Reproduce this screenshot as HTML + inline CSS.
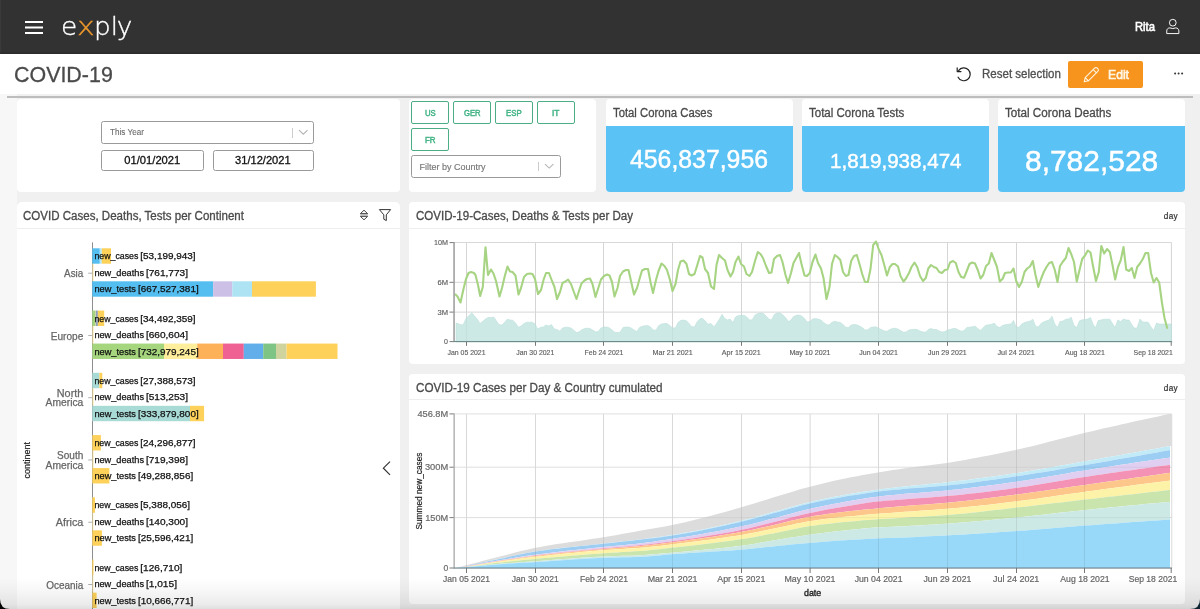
<!DOCTYPE html>
<html lang="en">
<head>
<meta charset="utf-8">
<title>exply – COVID-19</title>
<style>
*{box-sizing:border-box;margin:0;padding:0}
html,body{width:1200px;height:609px;overflow:hidden}
body{position:relative;background:#f0f0f0}
#app{position:absolute;left:0;top:0;width:1200px;height:609px;overflow:hidden;background:#f0f0f0;will-change:transform;font-family:"Liberation Sans",Arial,sans-serif;color:#333}
.t{position:absolute;white-space:pre;display:block}
.abs{position:absolute}
header{position:absolute;left:0;top:0;width:1200px;height:53.5px;background:#323232;box-shadow:inset 0 -1.5px 0 #2c2c2c,inset 1.2px 0 0 #3a3a3a}
.toolbar{position:absolute;left:0;top:53.5px;width:1200px;height:40.8px;background:#fff}
.lstrip{position:absolute;left:0;top:94.3px;width:16.5px;height:520px;background:#f7f7f7}
.rule{position:absolute;left:7px;top:96px;width:1186px;height:2px;background:#bdbdbd}
.card{position:absolute;background:#fff;border-radius:4px;overflow:hidden}
.card h2{font-weight:400}
.hdrline{position:absolute;left:0;right:0;height:1px;background:#eeeeee}
.sel{position:absolute;border:1px solid #9a9a9a;border-radius:2.5px;background:#fff}
.btn{position:absolute;border:1px solid #4dae85;border-radius:2px;background:#fff;width:38px;height:23px}
.kpi{position:absolute;left:0;right:0;bottom:0;background:#5bc2f5}
svg{position:absolute;left:0;top:0;overflow:visible}
svg text{font-family:"Liberation Sans",Arial,sans-serif}
.fade{position:absolute;left:0;top:578px;width:1200px;height:31px;background:linear-gradient(to bottom,rgba(0,0,0,0) 0%,rgba(0,0,0,0.03) 40%,rgba(0,0,0,0.08) 85%,rgba(0,0,0,0.125) 100%);pointer-events:none}
.corner{position:absolute;bottom:0;width:10px;height:10px;overflow:hidden}
</style>
</head>
<body>
<div id="app">
<header>
<svg class="abs" width="18" height="13" style="left:25px;top:21px" viewBox="0 0 18 13"><path d="M0 1h18M0 6.5h18M0 12h18" stroke="#fff" stroke-width="1.8" fill="none"/></svg>
<span class="t" style="left:60.70px;top:10.80px;font-size:24.8px;line-height:32px;color:#fff;-webkit-text-stroke:0.35px #fff;font-weight:200;font-family:'DejaVu Sans', 'Liberation Sans', sans-serif;transform:scaleX(1.062);transform-origin:0 0;">e<b style="font-weight:inherit;color:#ec982c;-webkit-text-stroke-color:#ec982c;display:inline-block;transform:scaleX(1.14);transform-origin:0 50%;margin-right:1.2px">x</b>pl<span style="margin-left:-1.2px">y</span></span>
<span class="t" style="left:1135.30px;top:18.80px;font-size:12px;line-height:16px;color:#fff;transform:scaleX(0.9370);transform-origin:0 0;-webkit-text-stroke:0.6px #fff;">Rita</span>
<svg class="abs" width="15.4" height="17.3" style="left:1164.7px;top:18.4px" viewBox="0 0 16 18"><circle cx="8.1" cy="4.9" r="3.5" fill="none" stroke="#fff" stroke-width="1"/><path d="M1.8 16.2 V13.4 C1.8 11.6 3.2 10.3 5 10.3 L8.1 11 L11.2 10.3 C13 10.3 14.4 11.6 14.4 13.4 V16.2 Z" fill="none" stroke="#fff" stroke-width="1" stroke-linejoin="round"/></svg>
</header>
<div class="toolbar"></div>
<h1 class="t" style="left:13.60px;top:60.60px;font-size:21.5px;line-height:28px;color:#4a4a4a;transform:scaleX(0.9963);transform-origin:0 0;-webkit-text-stroke:0.3px #4a4a4a;font-weight:400;">COVID-19</h1>
<svg class="abs" width="18" height="18" style="left:955.4px;top:66.1px" viewBox="0 0 18 18"><path d="M3.6 4.6 A6.4 6.4 0 1 1 3.1 11.2" fill="none" stroke="#222" stroke-width="1.2" stroke-linecap="round"/><path d="M2.2 1.9 L2.2 5.6 L6 5.6" fill="none" stroke="#222" stroke-width="1.2" stroke-linecap="round" stroke-linejoin="round"/></svg>
<span class="t" style="left:981.60px;top:65.70px;font-size:12px;line-height:16px;color:#505050;transform:scaleX(0.9604);transform-origin:0 0;-webkit-text-stroke:0.3px #505050;">Reset selection</span>
<div class="abs" style="left:1067.5px;top:60.5px;width:75.5px;height:27px;background:#f7941e;border-radius:2px"></div>
<svg class="abs" width="17" height="17" style="left:1082.5px;top:66px" viewBox="0 0 17 17"><path d="M1.2 15.8 L2.2 11.6 L11.6 2.2 C12.4 1.4 13.6 1.4 14.4 2.2 L14.8 2.6 C15.6 3.4 15.6 4.6 14.8 5.4 L5.4 14.8 Z M10.2 3.6 L13.4 6.8 M2.2 11.6 L5.4 14.8" fill="none" stroke="#fff4e0" stroke-width="1.1" stroke-linejoin="round" stroke-linecap="round"/></svg>
<span class="t" style="left:1107.60px;top:66.60px;font-size:12.5px;line-height:16px;color:#fff6e6;transform:scaleX(0.9746);transform-origin:0 0;-webkit-text-stroke:0.6px #fff6e6;">Edit</span>
<svg class="abs" width="10" height="3" style="left:1174px;top:72px" viewBox="0 0 10 3"><circle cx="1.1" cy="1.4" r="1" fill="#333"/><circle cx="4.6" cy="1.4" r="1" fill="#333"/><circle cx="8.1" cy="1.4" r="1" fill="#333"/></svg>
<div class="lstrip"></div>
<div class="rule"></div>
<section class="card" style="left:16.5px;top:99px;width:383.5px;height:93px"></section>
<div class="sel" style="left:101px;top:121px;width:213px;height:23px"></div>
<div class="abs" style="left:292px;top:127.5px;width:1px;height:10px;background:#ccc"></div>
<svg class="abs" width="8.6" height="5" style="left:298.6px;top:130.3px" viewBox="0 0 9 5"><path d="M0 0 L4.5 4.2 L9 0" fill="none" stroke="#b5b5b5" stroke-width="1.2"/></svg>
<span class="t" style="left:110.20px;top:126.50px;font-size:8.5px;line-height:11px;color:#6b6b6b;transform:scaleX(0.9590);transform-origin:0 0;-webkit-text-stroke:0.1px #6b6b6b;">This Year</span>
<div class="sel" style="left:101px;top:150px;width:102.5px;height:20.5px"></div>
<div class="sel" style="left:213px;top:150px;width:101px;height:20.5px"></div>
<span class="t" style="left:124.30px;top:152.80px;font-size:11.2px;line-height:15px;color:#111;-webkit-text-stroke:0.3px #111;">01/01/2021</span>
<span class="t" style="left:235.30px;top:152.80px;font-size:11.2px;line-height:15px;color:#111;transform:scaleX(0.9946);transform-origin:0 0;-webkit-text-stroke:0.3px #111;">31/12/2021</span>
<section class="card" style="left:408.8px;top:99px;width:187.2px;height:93px"></section>
<div class="btn" style="left:411px;top:101px"></div>
<div class="btn" style="left:453px;top:101px"></div>
<div class="btn" style="left:495px;top:101px"></div>
<div class="btn" style="left:537px;top:101px"></div>
<div class="btn" style="left:411px;top:128px"></div>
<span class="t" style="left:424.60px;top:106.70px;font-size:9px;line-height:12px;color:#45b487;transform:scaleX(0.8629);transform-origin:0 0;-webkit-text-stroke:0.5px #45b487;">US</span>
<span class="t" style="left:463.70px;top:106.70px;font-size:9px;line-height:12px;color:#45b487;transform:scaleX(0.8506);transform-origin:0 0;-webkit-text-stroke:0.5px #45b487;">GER</span>
<span class="t" style="left:506.20px;top:106.70px;font-size:9px;line-height:12px;color:#45b487;transform:scaleX(0.8659);transform-origin:0 0;-webkit-text-stroke:0.5px #45b487;">ESP</span>
<span class="t" style="left:552.30px;top:106.70px;font-size:9px;line-height:12px;color:#45b487;transform:scaleX(0.9250);transform-origin:0 0;-webkit-text-stroke:0.5px #45b487;">IT</span>
<span class="t" style="left:424.70px;top:133.70px;font-size:9px;line-height:12px;color:#45b487;transform:scaleX(0.8833);transform-origin:0 0;-webkit-text-stroke:0.5px #45b487;">FR</span>
<div class="sel" style="left:411px;top:155px;width:150px;height:22.5px"></div>
<div class="abs" style="left:538px;top:161.5px;width:1px;height:9.5px;background:#ccc"></div>
<svg class="abs" width="8.4" height="5" style="left:544.9px;top:164.3px" viewBox="0 0 9 5"><path d="M0 0 L4.5 4.2 L9 0" fill="none" stroke="#b5b5b5" stroke-width="1.2"/></svg>
<span class="t" style="left:419.60px;top:160.60px;font-size:9px;line-height:12px;color:#777;-webkit-text-stroke:0.15px #777;">Filter by Country</span>
<section class="card" style="left:605.6px;top:99px;width:187.4px;height:93.2px"><div class="kpi" style="top:26.8px"></div></section>
<h2 class="t" style="left:613.00px;top:105.00px;font-size:12px;line-height:16px;color:#4a4a4a;transform:scaleX(0.9422);transform-origin:0 0;-webkit-text-stroke:0.3px #4a4a4a;font-weight:400;">Total Corona Cases</h2>
<span class="t" style="left:630.30px;top:143.30px;font-size:25px;line-height:32px;color:#fff;transform:scaleX(0.9926);transform-origin:0 0;-webkit-text-stroke:0.45px #fff;">456,837,956</span>
<section class="card" style="left:801.5px;top:99px;width:187.5px;height:93.2px"><div class="kpi" style="top:26.8px"></div></section>
<h2 class="t" style="left:808.90px;top:105.00px;font-size:12px;line-height:16px;color:#4a4a4a;transform:scaleX(0.9599);transform-origin:0 0;-webkit-text-stroke:0.3px #4a4a4a;font-weight:400;">Total Corona Tests</h2>
<span class="t" style="left:829.50px;top:146.60px;font-size:21px;line-height:27px;color:#fff;transform:scaleX(0.9792);transform-origin:0 0;-webkit-text-stroke:0.45px #fff;">1,819,938,474</span>
<section class="card" style="left:998px;top:99px;width:187px;height:93.2px"><div class="kpi" style="top:26.8px"></div></section>
<h2 class="t" style="left:1005.00px;top:105.00px;font-size:12px;line-height:16px;color:#4a4a4a;transform:scaleX(0.9716);transform-origin:0 0;-webkit-text-stroke:0.3px #4a4a4a;font-weight:400;">Total Corona Deaths</h2>
<span class="t" style="left:1024.90px;top:141.00px;font-size:30px;line-height:39px;color:#fff;transform:scaleX(0.9980);transform-origin:0 0;-webkit-text-stroke:0.45px #fff;">8,782,528</span>
<section class="card" style="left:16.5px;top:201.8px;width:383.5px;height:420px;border-radius:5px"><div class="hdrline" style="top:26.2px"></div></section>
<section class="card" style="left:409px;top:201.8px;width:776px;height:162.4px"><div class="hdrline" style="top:26.2px"></div></section>
<section class="card" style="left:409px;top:374px;width:776px;height:229.5px"><div class="hdrline" style="top:25.4px"></div></section>
<h2 class="t" style="left:23.00px;top:208.20px;font-size:12px;line-height:16px;color:#4a4a4a;transform:scaleX(0.9613);transform-origin:0 0;-webkit-text-stroke:0.3px #4a4a4a;font-weight:400;">COVID Cases, Deaths, Tests per Continent</h2>
<h2 class="t" style="left:416.00px;top:208.20px;font-size:12px;line-height:16px;color:#4a4a4a;transform:scaleX(0.9607);transform-origin:0 0;-webkit-text-stroke:0.3px #4a4a4a;font-weight:400;">COVID-19-Cases, Deaths &amp; Tests per Day</h2>
<h2 class="t" style="left:416.00px;top:380.00px;font-size:12px;line-height:16px;color:#4a4a4a;transform:scaleX(0.9726);transform-origin:0 0;-webkit-text-stroke:0.3px #4a4a4a;font-weight:400;">COVID-19 Cases per Day &amp; Country cumulated</h2>
<span class="t" style="left:1163.70px;top:210.90px;font-size:8.2px;line-height:11px;color:#333;-webkit-text-stroke:0.2px #333;letter-spacing:0.398px;">day</span>
<span class="t" style="left:1163.70px;top:382.70px;font-size:8.2px;line-height:11px;color:#333;-webkit-text-stroke:0.2px #333;letter-spacing:0.398px;">day</span>
<svg class="abs" width="10" height="12" style="left:359px;top:209px" viewBox="0 0 10 12"><path d="M5 1.2 L8.6 4.6 H1.4 Z M5 10.8 L8.6 7.4 H1.4 Z" fill="none" stroke="#333" stroke-width="0.9" stroke-linejoin="round"/><path d="M1.2 6 H8.8" stroke="#999" stroke-width="1.2"/></svg>
<svg class="abs" width="14" height="14" style="left:378px;top:208px" viewBox="0 0 14 14"><path d="M1.4 1.6 H12.6 L8.3 6.8 V12.6 L5.8 11.2 V6.8 Z" fill="none" stroke="#333" stroke-width="1" stroke-linejoin="round"/></svg>
<svg class="abs" width="10" height="16" style="left:382px;top:460px" viewBox="0 0 10 16"><path d="M8 1.6 L1.4 8.2 L8 14.8" fill="none" stroke="#333" stroke-width="1.2"/></svg>
<svg width="1200" height="609" viewBox="0 0 1200 609">
<g id="bars"><rect x="92" y="242.4" width="1" height="380" fill="#8e8e8e"/>
<rect x="92.3" y="248.30" width="7.5" height="15.40" fill="#55bef0"/>
<rect x="99.8" y="248.30" width="2.0" height="15.40" fill="#b4e6f3"/>
<rect x="101.8" y="248.30" width="9.2" height="15.40" fill="#fdd15a"/>
<rect x="92.5" y="263.70" width="1.0" height="17.60" fill="#fdeaa2"/>
<rect x="92.3" y="281.30" width="120.8" height="15.40" fill="#55bef0"/>
<rect x="213.1" y="281.30" width="19.2" height="15.40" fill="#cdc0e6"/>
<rect x="232.3" y="281.30" width="19.7" height="15.40" fill="#ade3f2"/>
<rect x="252.0" y="281.30" width="63.9" height="15.40" fill="#fdd15a"/>
<rect x="92.3" y="310.56" width="2.9" height="15.40" fill="#a5d67e"/>
<rect x="95.2" y="310.56" width="0.7" height="15.40" fill="#d0d29c"/>
<rect x="95.9" y="310.56" width="2.0" height="15.40" fill="#8f9fb5"/>
<rect x="97.9" y="310.56" width="6.3" height="15.40" fill="#fdd15a"/>
<rect x="92.5" y="325.96" width="1.0" height="17.60" fill="#fdeaa2"/>
<rect x="92.3" y="343.56" width="71.7" height="15.40" fill="#a5d67e"/>
<rect x="164.0" y="343.56" width="33.2" height="15.40" fill="#ffee9b"/>
<rect x="197.2" y="343.56" width="25.8" height="15.40" fill="#fdb158"/>
<rect x="223.0" y="343.56" width="20.8" height="15.40" fill="#ef6093"/>
<rect x="243.8" y="343.56" width="19.4" height="15.40" fill="#62aeea"/>
<rect x="263.2" y="343.56" width="12.8" height="15.40" fill="#7dc485"/>
<rect x="276.0" y="343.56" width="10.5" height="15.40" fill="#cfd39e"/>
<rect x="286.5" y="343.56" width="51.0" height="15.40" fill="#fdd15a"/>
<rect x="92.3" y="372.82" width="7.1" height="15.40" fill="#a8dad6"/>
<rect x="99.4" y="372.82" width="2.9" height="15.40" fill="#fdd15a"/>
<rect x="92.5" y="388.22" width="1.0" height="17.60" fill="#fdeaa2"/>
<rect x="92.3" y="405.82" width="97.7" height="15.40" fill="#a8dad6"/>
<rect x="190.0" y="405.82" width="14.1" height="15.40" fill="#fdd15a"/>
<rect x="92.3" y="435.08" width="8.6" height="15.40" fill="#fdd15a"/>
<rect x="92.5" y="450.48" width="1.0" height="17.60" fill="#fdeaa2"/>
<rect x="92.3" y="468.08" width="17.1" height="15.40" fill="#fdd15a"/>
<rect x="92.3" y="497.34" width="2.7" height="15.40" fill="#fdd15a"/>
<rect x="92.5" y="512.74" width="0.8" height="17.60" fill="#fdeaa2"/>
<rect x="92.3" y="530.34" width="9.6" height="15.40" fill="#fdd15a"/>
<rect x="92.3" y="559.60" width="1.2" height="15.40" fill="#fdd15a"/>
<rect x="92.5" y="575.00" width="0.8" height="17.60" fill="#fdeaa2"/>
<rect x="92.3" y="592.60" width="4.3" height="15.40" fill="#fdd15a"/>
<rect x="88.2" y="272.70" width="4" height="1" fill="#b0b0b0"/>
<text x="83.3" y="277.3" font-size="10.3" fill="#666" text-anchor="end" textLength="19.2" lengthAdjust="spacingAndGlyphs" stroke="#666" stroke-width="0.25">Asia</text>
<text y="259.4" font-size="9.2" fill="#111" stroke="#111" stroke-width="0.25"><tspan x="94.4" textLength="44.0" lengthAdjust="spacingAndGlyphs">new_cases</tspan> <tspan x="140.3" textLength="55.3" lengthAdjust="spacingAndGlyphs">[53,199,943]</tspan></text>
<text y="275.9" font-size="9.2" fill="#111" stroke="#111" stroke-width="0.25"><tspan x="94.4" textLength="49.6" lengthAdjust="spacingAndGlyphs">new_deaths</tspan> <tspan x="145.9" textLength="42.1" lengthAdjust="spacingAndGlyphs">[761,773]</tspan></text>
<text y="292.4" font-size="9.2" fill="#111" stroke="#111" stroke-width="0.25"><tspan x="94.4" textLength="41.6" lengthAdjust="spacingAndGlyphs">new_tests</tspan> <tspan x="137.9" textLength="60.8" lengthAdjust="spacingAndGlyphs">[667,527,381]</tspan></text>
<rect x="88.2" y="334.96" width="4" height="1" fill="#b0b0b0"/>
<text x="83.3" y="339.6" font-size="10.3" fill="#666" text-anchor="end" textLength="32.5" lengthAdjust="spacingAndGlyphs" stroke="#666" stroke-width="0.25">Europe</text>
<text y="321.7" font-size="9.2" fill="#111" stroke="#111" stroke-width="0.25"><tspan x="94.4" textLength="44.0" lengthAdjust="spacingAndGlyphs">new_cases</tspan> <tspan x="140.3" textLength="55.3" lengthAdjust="spacingAndGlyphs">[34,492,359]</tspan></text>
<text y="338.2" font-size="9.2" fill="#111" stroke="#111" stroke-width="0.25"><tspan x="94.4" textLength="49.6" lengthAdjust="spacingAndGlyphs">new_deaths</tspan> <tspan x="145.9" textLength="42.1" lengthAdjust="spacingAndGlyphs">[660,604]</tspan></text>
<text y="354.7" font-size="9.2" fill="#111" stroke="#111" stroke-width="0.25"><tspan x="94.4" textLength="41.6" lengthAdjust="spacingAndGlyphs">new_tests</tspan> <tspan x="137.9" textLength="60.8" lengthAdjust="spacingAndGlyphs">[732,979,245]</tspan></text>
<rect x="88.2" y="397.22" width="4" height="1" fill="#b0b0b0"/>
<text x="83.3" y="396.5" font-size="10.3" fill="#666" text-anchor="end" textLength="26.5" lengthAdjust="spacingAndGlyphs" stroke="#666" stroke-width="0.25">North</text>
<text x="83.3" y="406.3" font-size="10.3" fill="#666" text-anchor="end" textLength="37.7" lengthAdjust="spacingAndGlyphs" stroke="#666" stroke-width="0.25">America</text>
<text y="383.9" font-size="9.2" fill="#111" stroke="#111" stroke-width="0.25"><tspan x="94.4" textLength="44.0" lengthAdjust="spacingAndGlyphs">new_cases</tspan> <tspan x="140.3" textLength="55.3" lengthAdjust="spacingAndGlyphs">[27,388,573]</tspan></text>
<text y="400.4" font-size="9.2" fill="#111" stroke="#111" stroke-width="0.25"><tspan x="94.4" textLength="49.6" lengthAdjust="spacingAndGlyphs">new_deaths</tspan> <tspan x="145.9" textLength="42.1" lengthAdjust="spacingAndGlyphs">[513,253]</tspan></text>
<text y="416.9" font-size="9.2" fill="#111" stroke="#111" stroke-width="0.25"><tspan x="94.4" textLength="41.6" lengthAdjust="spacingAndGlyphs">new_tests</tspan> <tspan x="137.9" textLength="60.8" lengthAdjust="spacingAndGlyphs">[333,879,800]</tspan></text>
<rect x="88.2" y="459.48" width="4" height="1" fill="#b0b0b0"/>
<text x="83.3" y="458.8" font-size="10.3" fill="#666" text-anchor="end" textLength="26.3" lengthAdjust="spacingAndGlyphs" stroke="#666" stroke-width="0.25">South</text>
<text x="83.3" y="468.6" font-size="10.3" fill="#666" text-anchor="end" textLength="37.7" lengthAdjust="spacingAndGlyphs" stroke="#666" stroke-width="0.25">America</text>
<text y="446.2" font-size="9.2" fill="#111" stroke="#111" stroke-width="0.25"><tspan x="94.4" textLength="44.0" lengthAdjust="spacingAndGlyphs">new_cases</tspan> <tspan x="140.3" textLength="55.3" lengthAdjust="spacingAndGlyphs">[24,296,877]</tspan></text>
<text y="462.7" font-size="9.2" fill="#111" stroke="#111" stroke-width="0.25"><tspan x="94.4" textLength="49.6" lengthAdjust="spacingAndGlyphs">new_deaths</tspan> <tspan x="145.9" textLength="42.1" lengthAdjust="spacingAndGlyphs">[719,398]</tspan></text>
<text y="479.2" font-size="9.2" fill="#111" stroke="#111" stroke-width="0.25"><tspan x="94.4" textLength="41.6" lengthAdjust="spacingAndGlyphs">new_tests</tspan> <tspan x="137.9" textLength="55.3" lengthAdjust="spacingAndGlyphs">[49,288,856]</tspan></text>
<rect x="88.2" y="521.74" width="4" height="1" fill="#b0b0b0"/>
<text x="83.3" y="526.3" font-size="10.3" fill="#666" text-anchor="end" textLength="27.6" lengthAdjust="spacingAndGlyphs" stroke="#666" stroke-width="0.25">Africa</text>
<text y="508.4" font-size="9.2" fill="#111" stroke="#111" stroke-width="0.25"><tspan x="94.4" textLength="44.0" lengthAdjust="spacingAndGlyphs">new_cases</tspan> <tspan x="140.3" textLength="49.8" lengthAdjust="spacingAndGlyphs">[5,388,056]</tspan></text>
<text y="524.9" font-size="9.2" fill="#111" stroke="#111" stroke-width="0.25"><tspan x="94.4" textLength="49.6" lengthAdjust="spacingAndGlyphs">new_deaths</tspan> <tspan x="145.9" textLength="42.1" lengthAdjust="spacingAndGlyphs">[140,300]</tspan></text>
<text y="541.4" font-size="9.2" fill="#111" stroke="#111" stroke-width="0.25"><tspan x="94.4" textLength="41.6" lengthAdjust="spacingAndGlyphs">new_tests</tspan> <tspan x="137.9" textLength="55.3" lengthAdjust="spacingAndGlyphs">[25,596,421]</tspan></text>
<rect x="88.2" y="584.00" width="4" height="1" fill="#b0b0b0"/>
<text x="83.3" y="588.6" font-size="10.3" fill="#666" text-anchor="end" textLength="37.0" lengthAdjust="spacingAndGlyphs" stroke="#666" stroke-width="0.25">Oceania</text>
<text y="570.7" font-size="9.2" fill="#111" stroke="#111" stroke-width="0.25"><tspan x="94.4" textLength="44.0" lengthAdjust="spacingAndGlyphs">new_cases</tspan> <tspan x="140.3" textLength="42.1" lengthAdjust="spacingAndGlyphs">[126,710]</tspan></text>
<text y="587.2" font-size="9.2" fill="#111" stroke="#111" stroke-width="0.25"><tspan x="94.4" textLength="49.6" lengthAdjust="spacingAndGlyphs">new_deaths</tspan> <tspan x="145.9" textLength="31.1" lengthAdjust="spacingAndGlyphs">[1,015]</tspan></text>
<text y="603.7" font-size="9.2" fill="#111" stroke="#111" stroke-width="0.25"><tspan x="94.4" textLength="41.6" lengthAdjust="spacingAndGlyphs">new_tests</tspan> <tspan x="137.9" textLength="55.3" lengthAdjust="spacingAndGlyphs">[10,666,771]</tspan></text>
<text x="30.0" y="460.2" font-size="8.7" fill="#222" text-anchor="middle" textLength="36.5" lengthAdjust="spacingAndGlyphs" stroke="#222" stroke-width="0.2" transform="rotate(-90 30.0 460.2)">continent</text></g>
<g id="line"><rect x="454.5" y="242.0" width="717.0" height="1" fill="#d8d8d8"/>
<rect x="1170.9" y="242.5" width="1.1" height="99.39999999999998" fill="#d8d8d8"/>
<rect x="454.5" y="281.82" width="717.0" height="1" fill="#d6d6d6"/>
<rect x="454.5" y="311.61" width="717.0" height="1" fill="#d6d6d6"/>
<rect x="466" y="242.5" width="1" height="99.39999999999998" fill="#d5d5d5"/>
<rect x="535" y="242.5" width="1" height="99.39999999999998" fill="#d5d5d5"/>
<rect x="603" y="242.5" width="1" height="99.39999999999998" fill="#d5d5d5"/>
<rect x="672" y="242.5" width="1" height="99.39999999999998" fill="#d5d5d5"/>
<rect x="741" y="242.5" width="1" height="99.39999999999998" fill="#d5d5d5"/>
<rect x="809.6" y="242.5" width="1" height="99.39999999999998" fill="#d5d5d5"/>
<rect x="878" y="242.5" width="1" height="99.39999999999998" fill="#d5d5d5"/>
<rect x="947" y="242.5" width="1" height="99.39999999999998" fill="#d5d5d5"/>
<rect x="1016" y="242.5" width="1" height="99.39999999999998" fill="#d5d5d5"/>
<rect x="1084" y="242.5" width="1" height="99.39999999999998" fill="#d5d5d5"/>
<path d="M456.0,341.9 L456.0,323.0 L460.5,324.5 L463.0,325.0 L466.0,318.5 L469.0,315.5 L471.8,312.8 L474.5,316.0 L477.2,319.0 L480.0,323.5 L482.5,321.5 L485.5,319.0 L488.0,317.5 L491.0,317.5 L494.0,317.2 L496.5,321.0 L499.0,324.5 L502.0,325.0 L504.5,322.5 L507.2,319.2 L510.0,320.0 L512.8,320.2 L515.5,323.0 L518.5,327.2 L521.0,326.0 L524.0,323.5 L526.8,322.2 L529.5,322.2 L532.2,322.2 L535.0,324.0 L537.8,329.2 L540.5,327.2 L543.2,327.0 L546.0,325.0 L548.8,326.0 L551.5,324.5 L554.3,329.0 L557.0,329.5 L559.8,331.2 L562.5,328.0 L565.5,327.2 L568.0,327.2 L571.0,328.0 L573.5,330.0 L576.5,332.5 L579.0,332.0 L581.5,330.0 L584.5,328.5 L587.0,328.2 L590.0,328.5 L592.5,330.0 L595.5,331.8 L598.0,331.8 L601.0,328.0 L604.0,327.0 L607.0,327.0 L609.5,328.0 L612.0,330.0 L614.8,332.2 L617.5,332.5 L620.0,332.2 L623.0,327.5 L626.0,327.0 L628.5,327.0 L631.2,328.0 L634.0,330.0 L636.8,331.5 L639.5,327.5 L642.2,326.2 L645.0,325.8 L647.8,325.5 L650.5,327.0 L653.2,330.0 L656.0,330.2 L658.8,325.5 L661.5,324.0 L664.3,323.5 L667.0,323.5 L669.8,325.5 L672.5,328.0 L675.5,327.8 L678.0,322.5 L680.5,320.5 L683.5,320.0 L686.5,320.8 L689.0,323.5 L691.5,326.5 L694.5,327.0 L697.0,322.0 L700.0,318.8 L702.5,318.3 L705.0,320.8 L708.0,324.2 L711.0,323.5 L714.0,326.8 L716.5,323.5 L719.5,319.0 L722.0,314.2 L724.8,318.5 L727.5,320.0 L730.0,319.0 L733.0,322.5 L735.5,317.0 L738.5,315.5 L741.2,315.3 L744.0,315.3 L746.8,317.0 L749.5,320.0 L752.2,319.8 L755.0,315.0 L757.8,313.5 L760.5,313.0 L763.2,313.3 L766.0,316.0 L768.8,319.0 L771.5,320.0 L774.3,314.5 L777.0,313.0 L779.8,313.0 L782.5,314.5 L785.5,317.5 L788.5,321.5 L791.0,320.0 L793.5,316.5 L796.5,315.3 L799.0,315.0 L801.5,316.0 L804.5,318.5 L807.0,322.0 L809.8,321.5 L812.5,319.0 L815.5,318.5 L818.0,319.0 L821.0,320.0 L823.5,322.5 L826.5,324.5 L829.0,325.0 L832.0,322.2 L834.8,321.3 L837.5,322.0 L840.3,322.5 L843.0,324.5 L845.8,327.2 L848.5,327.5 L851.2,325.0 L854.0,324.5 L856.8,324.8 L859.5,326.0 L862.2,327.5 L865.0,330.0 L867.8,329.8 L870.5,327.5 L873.2,327.0 L876.0,326.8 L878.8,328.5 L881.5,329.5 L884.3,331.0 L887.0,331.2 L889.8,329.5 L892.5,328.5 L895.0,328.2 L898.0,329.0 L900.5,330.5 L903.5,332.2 L906.0,332.0 L909.0,330.0 L911.5,329.5 L914.5,329.3 L917.2,329.5 L920.0,331.0 L923.0,332.0 L925.8,332.0 L928.3,329.5 L931.0,328.5 L933.8,329.5 L936.5,329.5 L939.2,331.0 L942.0,332.0 L944.8,331.5 L947.5,330.0 L950.0,329.5 L953.0,328.5 L955.8,328.5 L958.5,330.0 L961.2,331.2 L964.0,330.5 L966.8,327.5 L969.5,327.2 L972.2,326.8 L975.0,326.2 L977.8,328.5 L980.5,330.5 L983.2,327.5 L986.0,325.2 L988.8,324.8 L991.5,324.2 L994.3,323.2 L997.0,326.5 L999.8,327.5 L1002.5,325.5 L1005.0,324.8 L1008.0,324.2 L1010.8,324.0 L1013.5,320.5 L1016.2,327.0 L1019.0,327.2 L1021.8,324.0 L1024.5,322.5 L1027.2,321.8 L1030.0,321.2 L1032.8,319.2 L1035.5,326.0 L1038.3,327.0 L1041.0,323.5 L1043.8,321.8 L1046.5,320.8 L1049.2,320.0 L1052.0,316.2 L1054.8,324.0 L1057.5,327.5 L1060.0,321.5 L1063.0,321.0 L1065.8,319.2 L1068.5,319.0 L1071.2,317.2 L1074.0,325.5 L1076.8,327.5 L1079.5,320.8 L1082.2,319.8 L1085.0,319.5 L1087.8,319.0 L1090.5,317.5 L1093.0,324.0 L1095.5,328.0 L1098.2,320.5 L1101.0,320.0 L1104.0,319.2 L1107.0,319.2 L1109.8,319.2 L1112.5,323.5 L1115.0,327.5 L1117.8,320.0 L1120.5,321.5 L1123.5,319.0 L1126.2,320.0 L1129.0,320.0 L1131.8,324.5 L1134.0,328.0 L1137.0,328.0 L1140.0,319.0 L1142.8,322.0 L1145.5,322.0 L1148.2,322.2 L1151.0,327.0 L1153.7,330.5 L1156.5,323.0 L1159.2,324.0 L1162.0,324.0 L1165.0,324.0 L1171.5,324.0 L1171.5,341.9 Z" fill="#bfe3de" fill-opacity="0.78" stroke="#b4ddd6" stroke-width="0.5"/>
<path d="M455.5,294.5 L457.5,296.5 L460.5,302.5 L463.5,289.0 L466.0,279.0 L468.5,273.0 L471.0,272.0 L474.0,273.0 L475.5,275.0 L478.0,285.0 L480.2,296.0 L482.8,287.0 L485.5,247.2 L488.0,275.0 L491.0,269.5 L493.5,273.5 L496.0,281.0 L499.5,296.5 L502.0,288.0 L504.8,276.0 L507.5,266.5 L510.0,271.5 L512.5,272.0 L515.5,275.5 L518.5,294.5 L521.0,288.0 L524.0,277.0 L527.0,274.0 L530.0,273.5 L532.5,274.0 L535.0,279.0 L538.0,294.0 L541.0,290.0 L543.5,280.0 L546.0,273.0 L549.0,273.0 L552.0,281.0 L554.5,287.0 L557.0,299.0 L560.0,292.0 L562.5,283.0 L565.5,281.5 L568.0,279.5 L571.0,284.0 L573.5,291.0 L576.5,299.0 L579.0,291.0 L581.5,283.5 L584.5,280.5 L587.0,279.0 L590.0,278.5 L592.5,284.0 L595.5,297.0 L598.0,289.0 L601.0,279.5 L604.0,276.0 L607.0,274.5 L609.5,275.5 L612.0,282.0 L614.5,296.5 L617.5,288.0 L620.0,276.0 L623.0,271.5 L626.0,270.0 L628.5,270.0 L631.0,281.0 L634.0,294.5 L637.0,288.0 L639.5,279.0 L642.0,270.5 L645.0,269.0 L648.0,269.0 L650.5,282.0 L653.0,293.0 L656.0,280.0 L658.5,271.0 L661.5,263.5 L664.5,266.0 L667.0,270.0 L670.0,280.0 L672.5,291.0 L675.5,284.0 L678.0,270.0 L680.5,261.5 L683.5,260.5 L686.5,264.0 L689.0,274.0 L691.5,275.5 L694.5,274.0 L697.0,266.0 L700.0,256.0 L702.5,257.5 L705.0,269.0 L708.0,273.0 L711.0,286.5 L714.0,289.0 L716.5,265.0 L719.0,255.0 L722.0,258.0 L725.0,260.5 L727.5,270.0 L730.5,276.5 L733.0,272.0 L735.5,262.0 L738.5,256.5 L741.0,264.0 L744.0,266.5 L746.5,274.0 L749.5,276.0 L752.0,272.0 L755.0,261.0 L757.8,252.0 L760.5,254.0 L763.0,258.0 L766.0,266.0 L769.0,273.0 L771.5,272.5 L774.0,259.0 L777.0,256.0 L780.0,255.0 L782.5,262.0 L785.5,275.0 L788.0,283.0 L791.0,273.0 L793.5,263.0 L796.5,257.5 L799.0,253.0 L801.5,264.0 L804.5,275.5 L807.0,276.0 L809.8,273.0 L812.5,262.0 L815.5,254.5 L818.0,263.0 L821.0,268.5 L823.5,278.0 L826.5,299.0 L829.5,287.0 L832.0,264.0 L834.8,255.0 L837.5,257.0 L840.3,260.0 L843.0,272.0 L845.8,276.0 L848.5,275.0 L851.2,261.0 L854.0,256.0 L856.8,255.0 L859.5,264.0 L862.2,274.0 L865.0,282.0 L867.8,282.0 L870.5,269.0 L873.2,245.0 L876.0,241.5 L878.8,249.5 L881.5,255.0 L884.3,265.0 L887.0,275.5 L889.8,267.0 L892.5,264.0 L895.0,264.0 L898.0,266.5 L900.5,276.0 L903.5,281.5 L906.0,278.5 L909.0,273.0 L911.5,267.0 L914.5,262.5 L917.2,267.0 L920.0,276.0 L923.0,281.0 L925.8,278.0 L928.3,268.5 L931.0,265.0 L933.8,267.0 L936.5,268.0 L939.2,272.0 L942.0,273.0 L944.8,270.0 L947.5,269.5 L950.0,262.5 L953.0,261.0 L955.8,263.0 L958.5,272.0 L961.2,277.0 L964.0,277.8 L966.8,271.0 L969.5,264.0 L972.2,262.5 L975.0,263.5 L977.8,270.0 L980.5,278.5 L983.2,275.0 L986.0,266.0 L988.8,263.5 L991.5,253.0 L994.3,260.0 L997.0,267.0 L999.8,281.5 L1002.5,279.0 L1005.0,273.0 L1008.0,272.5 L1010.8,272.5 L1013.5,268.5 L1016.2,281.0 L1019.0,287.0 L1021.8,282.0 L1024.5,272.0 L1027.2,268.5 L1030.0,266.5 L1032.8,261.0 L1035.5,275.0 L1038.3,287.0 L1041.0,279.0 L1043.8,272.0 L1046.5,267.0 L1049.2,263.0 L1052.0,262.0 L1054.8,270.0 L1057.5,282.0 L1060.0,266.0 L1063.0,261.5 L1065.8,258.0 L1068.5,248.0 L1071.2,254.0 L1074.0,262.0 L1076.8,281.5 L1079.5,270.0 L1082.2,259.0 L1085.0,255.5 L1087.8,250.5 L1090.5,252.5 L1093.2,267.0 L1096.0,281.0 L1098.8,272.0 L1101.3,246.0 L1104.2,253.5 L1107.0,249.0 L1109.8,252.0 L1112.5,265.0 L1115.2,279.5 L1118.0,267.0 L1120.8,260.0 L1123.5,247.0 L1126.2,269.5 L1129.0,271.0 L1131.8,268.0 L1134.5,278.0 L1137.2,267.0 L1140.0,263.5 L1142.8,259.0 L1145.5,253.0 L1148.2,253.0 L1151.0,273.0 L1153.7,282.5 L1156.5,278.0 L1159.2,282.5 L1162.0,303.0 L1164.5,318.0 L1167.2,328.0" fill="none" stroke="#a7d483" stroke-width="2.1" stroke-linejoin="round" stroke-linecap="round"/>
<rect x="453.4" y="242.0" width="1.3" height="99.99999999999997" fill="#8c8c8c"/>
<rect x="453.4" y="341" width="718.7" height="1.1" fill="#6f8b8c"/>
<rect x="466" y="342" width="1" height="3.8" fill="#777"/>
<text x="466.5" y="355.3" font-size="7.2" fill="#606060" text-anchor="middle" textLength="38.0" lengthAdjust="spacingAndGlyphs" stroke="#606060" stroke-width="0.15">Jan 05 2021</text>
<rect x="535" y="342" width="1" height="3.8" fill="#777"/>
<text x="535.3" y="355.3" font-size="7.2" fill="#606060" text-anchor="middle" textLength="38.0" lengthAdjust="spacingAndGlyphs" stroke="#606060" stroke-width="0.15">Jan 30 2021</text>
<rect x="603" y="342" width="1" height="3.8" fill="#777"/>
<text x="604.0" y="355.3" font-size="7.2" fill="#606060" text-anchor="middle" textLength="38.9" lengthAdjust="spacingAndGlyphs" stroke="#606060" stroke-width="0.15">Feb 24 2021</text>
<rect x="672" y="342" width="1" height="3.8" fill="#777"/>
<text x="672.6" y="355.3" font-size="7.2" fill="#606060" text-anchor="middle" textLength="40.3" lengthAdjust="spacingAndGlyphs" stroke="#606060" stroke-width="0.15">Mar 21 2021</text>
<rect x="741" y="342" width="1" height="3.8" fill="#777"/>
<text x="741.3" y="355.3" font-size="7.2" fill="#606060" text-anchor="middle" textLength="38.9" lengthAdjust="spacingAndGlyphs" stroke="#606060" stroke-width="0.15">Apr 15 2021</text>
<rect x="809.6" y="342" width="1" height="3.8" fill="#777"/>
<text x="810.0" y="355.3" font-size="7.2" fill="#606060" text-anchor="middle" textLength="41.2" lengthAdjust="spacingAndGlyphs" stroke="#606060" stroke-width="0.15">May 10 2021</text>
<rect x="878" y="342" width="1" height="3.8" fill="#777"/>
<text x="878.6" y="355.3" font-size="7.2" fill="#606060" text-anchor="middle" textLength="38.6" lengthAdjust="spacingAndGlyphs" stroke="#606060" stroke-width="0.15">Jun 04 2021</text>
<rect x="947" y="342" width="1" height="3.8" fill="#777"/>
<text x="947.4" y="355.3" font-size="7.2" fill="#606060" text-anchor="middle" textLength="38.6" lengthAdjust="spacingAndGlyphs" stroke="#606060" stroke-width="0.15">Jun 29 2021</text>
<rect x="1016" y="342" width="1" height="3.8" fill="#777"/>
<text x="1016.2" y="355.3" font-size="7.2" fill="#606060" text-anchor="middle" textLength="37.4" lengthAdjust="spacingAndGlyphs" stroke="#606060" stroke-width="0.15">Jul 24 2021</text>
<rect x="1084" y="342" width="1" height="3.8" fill="#777"/>
<text x="1084.9" y="355.3" font-size="7.2" fill="#606060" text-anchor="middle" textLength="39.9" lengthAdjust="spacingAndGlyphs" stroke="#606060" stroke-width="0.15">Aug 18 2021</text>
<rect x="1170.7" y="342" width="1" height="3.8" fill="#777"/>
<text x="1172.8" y="355.3" font-size="7.2" fill="#606060" text-anchor="end" textLength="39.2" lengthAdjust="spacingAndGlyphs" stroke="#606060" stroke-width="0.15">Sep 18 2021</text>
<rect x="449.5" y="242.10" width="4.2" height="1" fill="#7c7c7c"/>
<text x="448.0" y="245.2" font-size="7.2" fill="#606060" text-anchor="end" textLength="14.0" lengthAdjust="spacingAndGlyphs" stroke="#606060" stroke-width="0.15">10M</text>
<rect x="449.5" y="281.82" width="4.2" height="1" fill="#7c7c7c"/>
<text x="448.0" y="284.9" font-size="7.2" fill="#606060" text-anchor="end" textLength="10.6" lengthAdjust="spacingAndGlyphs" stroke="#606060" stroke-width="0.15">6M</text>
<rect x="449.5" y="311.61" width="4.2" height="1" fill="#7c7c7c"/>
<text x="448.0" y="314.7" font-size="7.2" fill="#606060" text-anchor="end" textLength="10.6" lengthAdjust="spacingAndGlyphs" stroke="#606060" stroke-width="0.15">3M</text>
<rect x="449.5" y="341.10" width="4.2" height="1" fill="#7c7c7c"/>
<text x="448.0" y="344.2" font-size="7.2" fill="#606060" text-anchor="end" textLength="3.9" lengthAdjust="spacingAndGlyphs" stroke="#606060" stroke-width="0.15">0</text></g>
<g id="stack"><rect x="454.5" y="413.4" width="717.2" height="1" fill="#e0e0e0"/>
<rect x="1171.1000000000001" y="413.9" width="1.2" height="154.10000000000002" fill="#e0e0e0"/>
<rect x="454.5" y="466.7" width="717.2" height="1" fill="#dedede"/>
<rect x="454.5" y="517.1" width="717.2" height="1" fill="#dedede"/>
<rect x="466" y="413.9" width="1" height="154.10000000000002" fill="#d9d9d9"/>
<rect x="535" y="413.9" width="1" height="154.10000000000002" fill="#d9d9d9"/>
<rect x="603" y="413.9" width="1" height="154.10000000000002" fill="#d9d9d9"/>
<rect x="672" y="413.9" width="1" height="154.10000000000002" fill="#d9d9d9"/>
<rect x="741" y="413.9" width="1" height="154.10000000000002" fill="#d9d9d9"/>
<rect x="809.6" y="413.9" width="1" height="154.10000000000002" fill="#d9d9d9"/>
<rect x="878" y="413.9" width="1" height="154.10000000000002" fill="#d9d9d9"/>
<rect x="947" y="413.9" width="1" height="154.10000000000002" fill="#d9d9d9"/>
<rect x="1016" y="413.9" width="1" height="154.10000000000002" fill="#d9d9d9"/>
<rect x="1084" y="413.9" width="1" height="154.10000000000002" fill="#d9d9d9"/>
<path d="M455.0,568.0 L461.0,566.52 L467.0,565.02 L473.0,563.49 L479.0,561.93 L485.0,560.36 L491.0,558.8 L497.0,557.26 L503.0,555.74 L509.0,554.18 L515.0,552.61 L521.0,551.08 L527.0,549.63 L533.0,548.3 L539.0,547.13 L545.0,546.06 L551.0,545.05 L557.0,544.11 L563.0,543.2 L569.0,542.33 L575.0,541.48 L581.0,540.63 L587.0,539.76 L593.0,538.87 L599.0,537.95 L605.0,536.97 L611.0,535.95 L617.0,534.9 L623.0,533.84 L629.0,532.76 L635.0,531.69 L641.0,530.62 L647.0,529.59 L653.0,528.57 L659.0,527.54 L665.0,526.46 L671.0,525.31 L677.0,524.05 L683.0,522.72 L689.0,521.33 L695.0,519.87 L701.0,518.37 L707.0,516.81 L713.0,515.22 L719.0,513.59 L725.0,511.93 L731.0,510.26 L737.0,508.57 L743.0,506.87 L749.0,505.1 L755.0,503.25 L761.0,501.36 L767.0,499.46 L773.0,497.61 L779.0,495.79 L785.0,493.96 L791.0,492.13 L797.0,490.33 L803.0,488.6 L809.0,486.96 L815.0,485.41 L821.0,483.92 L827.0,482.47 L833.0,481.09 L839.0,479.76 L845.0,478.5 L851.0,477.3 L857.0,476.17 L863.0,475.07 L869.0,474.02 L875.0,472.99 L881.0,471.98 L887.0,471.0 L893.0,470.05 L899.0,469.15 L905.0,468.3 L911.0,467.52 L917.0,466.77 L923.0,466.04 L929.0,465.31 L935.0,464.55 L941.0,463.75 L947.0,462.88 L953.0,461.94 L959.0,460.95 L965.0,459.92 L971.0,458.85 L977.0,457.73 L983.0,456.59 L989.0,455.41 L995.0,454.2 L1001.0,452.97 L1007.0,451.72 L1013.0,450.45 L1019.0,449.16 L1025.0,447.8 L1031.0,446.38 L1037.0,444.91 L1043.0,443.4 L1049.0,441.87 L1055.0,440.32 L1061.0,438.77 L1067.0,437.23 L1073.0,435.72 L1079.0,434.23 L1085.0,432.8 L1091.0,431.4 L1097.0,430.01 L1103.0,428.62 L1109.0,427.25 L1115.0,425.89 L1121.0,424.53 L1127.0,423.19 L1133.0,421.86 L1139.0,420.54 L1145.0,419.23 L1151.0,417.93 L1157.0,416.64 L1163.0,415.37 L1169.0,414.11 L1170.0,413.9 L1171.7,413.9 L1171.7,446.0 L1170.0,446.0 L1169.0,446.18 L1163.0,447.29 L1157.0,448.39 L1151.0,449.48 L1145.0,450.57 L1139.0,451.66 L1133.0,452.75 L1127.0,453.83 L1121.0,454.91 L1115.0,455.98 L1109.0,457.05 L1103.0,458.12 L1097.0,459.18 L1091.0,460.24 L1085.0,461.3 L1079.0,462.36 L1073.0,463.44 L1067.0,464.52 L1061.0,465.6 L1055.0,466.67 L1049.0,467.74 L1043.0,468.79 L1037.0,469.81 L1031.0,470.82 L1025.0,471.79 L1019.0,472.72 L1013.0,473.62 L1007.0,474.5 L1001.0,475.36 L995.0,476.2 L989.0,477.02 L983.0,477.83 L977.0,478.61 L971.0,479.38 L965.0,480.13 L959.0,480.86 L953.0,481.57 L947.0,482.26 L941.0,482.91 L935.0,483.52 L929.0,484.11 L923.0,484.68 L917.0,485.26 L911.0,485.85 L905.0,486.46 L899.0,487.11 L893.0,487.79 L887.0,488.51 L881.0,489.27 L875.0,490.08 L869.0,490.94 L863.0,491.84 L857.0,492.78 L851.0,493.77 L845.0,494.8 L839.0,495.88 L833.0,497.01 L827.0,498.2 L821.0,499.45 L815.0,500.76 L809.0,502.14 L803.0,503.64 L797.0,505.25 L791.0,506.95 L785.0,508.67 L779.0,510.39 L773.0,512.05 L767.0,513.75 L761.0,515.46 L755.0,517.16 L749.0,518.8 L743.0,520.34 L737.0,521.77 L731.0,523.17 L725.0,524.55 L719.0,525.89 L713.0,527.2 L707.0,528.47 L701.0,529.7 L695.0,530.88 L689.0,532.03 L683.0,533.12 L677.0,534.16 L671.0,535.14 L665.0,536.06 L659.0,536.92 L653.0,537.74 L647.0,538.52 L641.0,539.28 L635.0,540.01 L629.0,540.7 L623.0,541.37 L617.0,542.02 L611.0,542.67 L605.0,543.34 L599.0,544.02 L593.0,544.66 L587.0,545.3 L581.0,545.92 L575.0,546.54 L569.0,547.18 L563.0,547.84 L557.0,548.53 L551.0,549.26 L545.0,550.04 L539.0,550.88 L533.0,551.8 L527.0,552.88 L521.0,554.1 L515.0,555.41 L509.0,556.75 L503.0,558.06 L497.0,559.33 L491.0,560.6 L485.0,561.88 L479.0,563.16 L473.0,564.43 L467.0,565.66 L461.0,566.85 L455.0,568.0 Z" fill="#dcdcdc"/>
<path d="M455.0,568.0 L461.0,566.85 L467.0,565.66 L473.0,564.43 L479.0,563.16 L485.0,561.88 L491.0,560.6 L497.0,559.33 L503.0,558.06 L509.0,556.75 L515.0,555.41 L521.0,554.1 L527.0,552.88 L533.0,551.8 L539.0,550.88 L545.0,550.04 L551.0,549.26 L557.0,548.53 L563.0,547.84 L569.0,547.18 L575.0,546.54 L581.0,545.92 L587.0,545.3 L593.0,544.66 L599.0,544.02 L605.0,543.34 L611.0,542.67 L617.0,542.02 L623.0,541.37 L629.0,540.7 L635.0,540.01 L641.0,539.28 L647.0,538.52 L653.0,537.74 L659.0,536.92 L665.0,536.06 L671.0,535.14 L677.0,534.16 L683.0,533.12 L689.0,532.03 L695.0,530.88 L701.0,529.7 L707.0,528.47 L713.0,527.2 L719.0,525.89 L725.0,524.55 L731.0,523.17 L737.0,521.77 L743.0,520.34 L749.0,518.8 L755.0,517.16 L761.0,515.46 L767.0,513.75 L773.0,512.05 L779.0,510.39 L785.0,508.67 L791.0,506.95 L797.0,505.25 L803.0,503.64 L809.0,502.14 L815.0,500.76 L821.0,499.45 L827.0,498.2 L833.0,497.01 L839.0,495.88 L845.0,494.8 L851.0,493.77 L857.0,492.78 L863.0,491.84 L869.0,490.94 L875.0,490.08 L881.0,489.27 L887.0,488.51 L893.0,487.79 L899.0,487.11 L905.0,486.46 L911.0,485.85 L917.0,485.26 L923.0,484.68 L929.0,484.11 L935.0,483.52 L941.0,482.91 L947.0,482.26 L953.0,481.57 L959.0,480.86 L965.0,480.13 L971.0,479.38 L977.0,478.61 L983.0,477.83 L989.0,477.02 L995.0,476.2 L1001.0,475.36 L1007.0,474.5 L1013.0,473.62 L1019.0,472.72 L1025.0,471.79 L1031.0,470.82 L1037.0,469.81 L1043.0,468.79 L1049.0,467.74 L1055.0,466.67 L1061.0,465.6 L1067.0,464.52 L1073.0,463.44 L1079.0,462.36 L1085.0,461.3 L1091.0,460.24 L1097.0,459.18 L1103.0,458.12 L1109.0,457.05 L1115.0,455.98 L1121.0,454.91 L1127.0,453.83 L1133.0,452.75 L1139.0,451.66 L1145.0,450.57 L1151.0,449.48 L1157.0,448.39 L1163.0,447.29 L1169.0,446.18 L1170.0,446.0 L1170.0,450.1 L1169.0,450.28 L1163.0,451.36 L1157.0,452.44 L1151.0,453.51 L1145.0,454.58 L1139.0,455.65 L1133.0,456.7 L1127.0,457.76 L1121.0,458.81 L1115.0,459.85 L1109.0,460.89 L1103.0,461.92 L1097.0,462.95 L1091.0,463.98 L1085.0,465.0 L1079.0,466.02 L1073.0,467.05 L1067.0,468.08 L1061.0,469.11 L1055.0,470.13 L1049.0,471.14 L1043.0,472.14 L1037.0,473.12 L1031.0,474.09 L1025.0,475.02 L1019.0,475.93 L1013.0,476.81 L1007.0,477.69 L1001.0,478.57 L995.0,479.43 L989.0,480.28 L983.0,481.12 L977.0,481.93 L971.0,482.71 L965.0,483.45 L959.0,484.16 L953.0,484.83 L947.0,485.45 L941.0,486.01 L935.0,486.52 L929.0,486.99 L923.0,487.44 L917.0,487.89 L911.0,488.35 L905.0,488.85 L899.0,489.39 L893.0,489.98 L887.0,490.62 L881.0,491.3 L875.0,492.04 L869.0,492.85 L863.0,493.72 L857.0,494.64 L851.0,495.6 L845.0,496.6 L839.0,497.63 L833.0,498.71 L827.0,499.85 L821.0,501.04 L815.0,502.3 L809.0,503.63 L803.0,505.09 L797.0,506.67 L791.0,508.34 L785.0,510.03 L779.0,511.71 L773.0,513.34 L767.0,514.98 L761.0,516.64 L755.0,518.28 L749.0,519.86 L743.0,521.35 L737.0,522.74 L731.0,524.1 L725.0,525.45 L719.0,526.76 L713.0,528.04 L707.0,529.28 L701.0,530.48 L695.0,531.64 L689.0,532.74 L683.0,533.8 L677.0,534.79 L671.0,535.73 L665.0,536.59 L659.0,537.39 L653.0,538.14 L647.0,538.87 L641.0,539.58 L635.0,540.28 L629.0,540.95 L623.0,541.6 L617.0,542.24 L611.0,542.89 L605.0,543.54 L599.0,544.21 L593.0,544.84 L587.0,545.46 L581.0,546.08 L575.0,546.69 L569.0,547.32 L563.0,547.97 L557.0,548.65 L551.0,549.37 L545.0,550.15 L539.0,550.98 L533.0,551.9 L527.0,552.98 L521.0,554.2 L515.0,555.51 L509.0,556.84 L503.0,558.16 L497.0,559.43 L491.0,560.71 L485.0,562.0 L479.0,563.29 L473.0,564.55 L467.0,565.76 L461.0,566.91 L455.0,568.0 Z" fill="#c3ebf7"/>
<path d="M455.0,568.0 L461.0,566.91 L467.0,565.76 L473.0,564.55 L479.0,563.29 L485.0,562.0 L491.0,560.71 L497.0,559.43 L503.0,558.16 L509.0,556.84 L515.0,555.51 L521.0,554.2 L527.0,552.98 L533.0,551.9 L539.0,550.98 L545.0,550.15 L551.0,549.37 L557.0,548.65 L563.0,547.97 L569.0,547.32 L575.0,546.69 L581.0,546.08 L587.0,545.46 L593.0,544.84 L599.0,544.21 L605.0,543.54 L611.0,542.89 L617.0,542.24 L623.0,541.6 L629.0,540.95 L635.0,540.28 L641.0,539.58 L647.0,538.87 L653.0,538.14 L659.0,537.39 L665.0,536.59 L671.0,535.73 L677.0,534.79 L683.0,533.8 L689.0,532.74 L695.0,531.64 L701.0,530.48 L707.0,529.28 L713.0,528.04 L719.0,526.76 L725.0,525.45 L731.0,524.1 L737.0,522.74 L743.0,521.35 L749.0,519.86 L755.0,518.28 L761.0,516.64 L767.0,514.98 L773.0,513.34 L779.0,511.71 L785.0,510.03 L791.0,508.34 L797.0,506.67 L803.0,505.09 L809.0,503.63 L815.0,502.3 L821.0,501.04 L827.0,499.85 L833.0,498.71 L839.0,497.63 L845.0,496.6 L851.0,495.6 L857.0,494.64 L863.0,493.72 L869.0,492.85 L875.0,492.04 L881.0,491.3 L887.0,490.62 L893.0,489.98 L899.0,489.39 L905.0,488.85 L911.0,488.35 L917.0,487.89 L923.0,487.44 L929.0,486.99 L935.0,486.52 L941.0,486.01 L947.0,485.45 L953.0,484.83 L959.0,484.16 L965.0,483.45 L971.0,482.71 L977.0,481.93 L983.0,481.12 L989.0,480.28 L995.0,479.43 L1001.0,478.57 L1007.0,477.69 L1013.0,476.81 L1019.0,475.93 L1025.0,475.02 L1031.0,474.09 L1037.0,473.12 L1043.0,472.14 L1049.0,471.14 L1055.0,470.13 L1061.0,469.11 L1067.0,468.08 L1073.0,467.05 L1079.0,466.02 L1085.0,465.0 L1091.0,463.98 L1097.0,462.95 L1103.0,461.92 L1109.0,460.89 L1115.0,459.85 L1121.0,458.81 L1127.0,457.76 L1133.0,456.7 L1139.0,455.65 L1145.0,454.58 L1151.0,453.51 L1157.0,452.44 L1163.0,451.36 L1169.0,450.28 L1170.0,450.1 L1170.0,457.5 L1169.0,457.64 L1163.0,458.52 L1157.0,459.39 L1151.0,460.28 L1145.0,461.17 L1139.0,462.07 L1133.0,462.97 L1127.0,463.88 L1121.0,464.79 L1115.0,465.71 L1109.0,466.64 L1103.0,467.57 L1097.0,468.51 L1091.0,469.45 L1085.0,470.4 L1079.0,471.37 L1073.0,472.36 L1067.0,473.38 L1061.0,474.41 L1055.0,475.45 L1049.0,476.48 L1043.0,477.51 L1037.0,478.51 L1031.0,479.49 L1025.0,480.44 L1019.0,481.34 L1013.0,482.2 L1007.0,483.05 L1001.0,483.89 L995.0,484.71 L989.0,485.52 L983.0,486.31 L977.0,487.07 L971.0,487.81 L965.0,488.52 L959.0,489.2 L953.0,489.84 L947.0,490.45 L941.0,491.0 L935.0,491.51 L929.0,491.98 L923.0,492.44 L917.0,492.89 L911.0,493.36 L905.0,493.86 L899.0,494.39 L893.0,494.95 L887.0,495.55 L881.0,496.2 L875.0,496.95 L869.0,497.79 L863.0,498.72 L857.0,499.71 L851.0,500.75 L845.0,501.8 L839.0,502.88 L833.0,504.0 L827.0,505.18 L821.0,506.4 L815.0,507.69 L809.0,509.03 L803.0,510.49 L797.0,512.05 L791.0,513.68 L785.0,515.33 L779.0,516.95 L773.0,518.52 L767.0,520.09 L761.0,521.67 L755.0,523.21 L749.0,524.7 L743.0,526.08 L737.0,527.35 L731.0,528.57 L725.0,529.76 L719.0,530.9 L713.0,532.02 L707.0,533.09 L701.0,534.14 L695.0,535.16 L689.0,536.16 L683.0,537.14 L677.0,538.09 L671.0,539.03 L665.0,539.96 L659.0,540.86 L653.0,541.72 L647.0,542.53 L641.0,543.28 L635.0,543.96 L629.0,544.57 L623.0,545.15 L617.0,545.7 L611.0,546.26 L605.0,546.86 L599.0,547.48 L593.0,548.1 L587.0,548.72 L581.0,549.34 L575.0,549.97 L569.0,550.61 L563.0,551.27 L557.0,551.95 L551.0,552.65 L545.0,553.38 L539.0,554.14 L533.0,554.94 L527.0,555.8 L521.0,556.73 L515.0,557.7 L509.0,558.69 L503.0,559.7 L497.0,560.71 L491.0,561.77 L485.0,562.86 L479.0,563.96 L473.0,565.04 L467.0,566.08 L461.0,567.06 L455.0,568.0 Z" fill="#9ccdf2"/>
<path d="M455.0,568.0 L461.0,567.06 L467.0,566.08 L473.0,565.04 L479.0,563.96 L485.0,562.86 L491.0,561.77 L497.0,560.71 L503.0,559.7 L509.0,558.69 L515.0,557.7 L521.0,556.73 L527.0,555.8 L533.0,554.94 L539.0,554.14 L545.0,553.38 L551.0,552.65 L557.0,551.95 L563.0,551.27 L569.0,550.61 L575.0,549.97 L581.0,549.34 L587.0,548.72 L593.0,548.1 L599.0,547.48 L605.0,546.86 L611.0,546.26 L617.0,545.7 L623.0,545.15 L629.0,544.57 L635.0,543.96 L641.0,543.28 L647.0,542.53 L653.0,541.72 L659.0,540.86 L665.0,539.96 L671.0,539.03 L677.0,538.09 L683.0,537.14 L689.0,536.16 L695.0,535.16 L701.0,534.14 L707.0,533.09 L713.0,532.02 L719.0,530.9 L725.0,529.76 L731.0,528.57 L737.0,527.35 L743.0,526.08 L749.0,524.7 L755.0,523.21 L761.0,521.67 L767.0,520.09 L773.0,518.52 L779.0,516.95 L785.0,515.33 L791.0,513.68 L797.0,512.05 L803.0,510.49 L809.0,509.03 L815.0,507.69 L821.0,506.4 L827.0,505.18 L833.0,504.0 L839.0,502.88 L845.0,501.8 L851.0,500.75 L857.0,499.71 L863.0,498.72 L869.0,497.79 L875.0,496.95 L881.0,496.2 L887.0,495.55 L893.0,494.95 L899.0,494.39 L905.0,493.86 L911.0,493.36 L917.0,492.89 L923.0,492.44 L929.0,491.98 L935.0,491.51 L941.0,491.0 L947.0,490.45 L953.0,489.84 L959.0,489.2 L965.0,488.52 L971.0,487.81 L977.0,487.07 L983.0,486.31 L989.0,485.52 L995.0,484.71 L1001.0,483.89 L1007.0,483.05 L1013.0,482.2 L1019.0,481.34 L1025.0,480.44 L1031.0,479.49 L1037.0,478.51 L1043.0,477.51 L1049.0,476.48 L1055.0,475.45 L1061.0,474.41 L1067.0,473.38 L1073.0,472.36 L1079.0,471.37 L1085.0,470.4 L1091.0,469.45 L1097.0,468.51 L1103.0,467.57 L1109.0,466.64 L1115.0,465.71 L1121.0,464.79 L1127.0,463.88 L1133.0,462.97 L1139.0,462.07 L1145.0,461.17 L1151.0,460.28 L1157.0,459.39 L1163.0,458.52 L1169.0,457.64 L1170.0,457.5 L1170.0,464.9 L1169.0,465.03 L1163.0,465.82 L1157.0,466.62 L1151.0,467.43 L1145.0,468.25 L1139.0,469.07 L1133.0,469.91 L1127.0,470.76 L1121.0,471.61 L1115.0,472.47 L1109.0,473.34 L1103.0,474.22 L1097.0,475.11 L1091.0,476.0 L1085.0,476.9 L1079.0,477.83 L1073.0,478.79 L1067.0,479.78 L1061.0,480.79 L1055.0,481.81 L1049.0,482.82 L1043.0,483.83 L1037.0,484.82 L1031.0,485.77 L1025.0,486.69 L1019.0,487.56 L1013.0,488.37 L1007.0,489.17 L1001.0,489.96 L995.0,490.73 L989.0,491.48 L983.0,492.22 L977.0,492.92 L971.0,493.61 L965.0,494.26 L959.0,494.89 L953.0,495.49 L947.0,496.05 L941.0,496.56 L935.0,497.04 L929.0,497.49 L923.0,497.92 L917.0,498.34 L911.0,498.77 L905.0,499.21 L899.0,499.68 L893.0,500.14 L887.0,500.61 L881.0,501.15 L875.0,501.79 L869.0,502.57 L863.0,503.45 L857.0,504.4 L851.0,505.4 L845.0,506.4 L839.0,507.42 L833.0,508.48 L827.0,509.58 L821.0,510.74 L815.0,511.95 L809.0,513.22 L803.0,514.59 L797.0,516.06 L791.0,517.6 L785.0,519.15 L779.0,520.7 L773.0,522.2 L767.0,523.73 L761.0,525.29 L755.0,526.81 L749.0,528.27 L743.0,529.59 L737.0,530.79 L731.0,531.93 L725.0,533.03 L719.0,534.09 L713.0,535.11 L707.0,536.09 L701.0,537.04 L695.0,537.96 L689.0,538.85 L683.0,539.72 L677.0,540.57 L671.0,541.41 L665.0,542.22 L659.0,543.0 L653.0,543.74 L647.0,544.44 L641.0,545.1 L635.0,545.69 L629.0,546.23 L623.0,546.74 L617.0,547.23 L611.0,547.74 L605.0,548.27 L599.0,548.83 L593.0,549.4 L587.0,549.97 L581.0,550.55 L575.0,551.14 L569.0,551.75 L563.0,552.36 L557.0,553.0 L551.0,553.66 L545.0,554.35 L539.0,555.07 L533.0,555.82 L527.0,556.64 L521.0,557.51 L515.0,558.43 L509.0,559.37 L503.0,560.33 L497.0,561.28 L491.0,562.28 L485.0,563.31 L479.0,564.34 L473.0,565.34 L467.0,566.29 L461.0,567.17 L455.0,568.0 Z" fill="#e0cff0"/>
<path d="M455.0,568.0 L461.0,567.17 L467.0,566.29 L473.0,565.34 L479.0,564.34 L485.0,563.31 L491.0,562.28 L497.0,561.28 L503.0,560.33 L509.0,559.37 L515.0,558.43 L521.0,557.51 L527.0,556.64 L533.0,555.82 L539.0,555.07 L545.0,554.35 L551.0,553.66 L557.0,553.0 L563.0,552.36 L569.0,551.75 L575.0,551.14 L581.0,550.55 L587.0,549.97 L593.0,549.4 L599.0,548.83 L605.0,548.27 L611.0,547.74 L617.0,547.23 L623.0,546.74 L629.0,546.23 L635.0,545.69 L641.0,545.1 L647.0,544.44 L653.0,543.74 L659.0,543.0 L665.0,542.22 L671.0,541.41 L677.0,540.57 L683.0,539.72 L689.0,538.85 L695.0,537.96 L701.0,537.04 L707.0,536.09 L713.0,535.11 L719.0,534.09 L725.0,533.03 L731.0,531.93 L737.0,530.79 L743.0,529.59 L749.0,528.27 L755.0,526.81 L761.0,525.29 L767.0,523.73 L773.0,522.2 L779.0,520.7 L785.0,519.15 L791.0,517.6 L797.0,516.06 L803.0,514.59 L809.0,513.22 L815.0,511.95 L821.0,510.74 L827.0,509.58 L833.0,508.48 L839.0,507.42 L845.0,506.4 L851.0,505.4 L857.0,504.4 L863.0,503.45 L869.0,502.57 L875.0,501.79 L881.0,501.15 L887.0,500.61 L893.0,500.14 L899.0,499.68 L905.0,499.21 L911.0,498.77 L917.0,498.34 L923.0,497.92 L929.0,497.49 L935.0,497.04 L941.0,496.56 L947.0,496.05 L953.0,495.49 L959.0,494.89 L965.0,494.26 L971.0,493.61 L977.0,492.92 L983.0,492.22 L989.0,491.48 L995.0,490.73 L1001.0,489.96 L1007.0,489.17 L1013.0,488.37 L1019.0,487.56 L1025.0,486.69 L1031.0,485.77 L1037.0,484.82 L1043.0,483.83 L1049.0,482.82 L1055.0,481.81 L1061.0,480.79 L1067.0,479.78 L1073.0,478.79 L1079.0,477.83 L1085.0,476.9 L1091.0,476.0 L1097.0,475.11 L1103.0,474.22 L1109.0,473.34 L1115.0,472.47 L1121.0,471.61 L1127.0,470.76 L1133.0,469.91 L1139.0,469.07 L1145.0,468.25 L1151.0,467.43 L1157.0,466.62 L1163.0,465.82 L1169.0,465.03 L1170.0,464.9 L1170.0,472.8 L1169.0,472.94 L1163.0,473.8 L1157.0,474.66 L1151.0,475.52 L1145.0,476.38 L1139.0,477.24 L1133.0,478.09 L1127.0,478.95 L1121.0,479.8 L1115.0,480.65 L1109.0,481.5 L1103.0,482.35 L1097.0,483.2 L1091.0,484.05 L1085.0,484.9 L1079.0,485.75 L1073.0,486.61 L1067.0,487.47 L1061.0,488.34 L1055.0,489.2 L1049.0,490.06 L1043.0,490.91 L1037.0,491.75 L1031.0,492.57 L1025.0,493.38 L1019.0,494.18 L1013.0,494.95 L1007.0,495.73 L1001.0,496.5 L995.0,497.27 L989.0,498.04 L983.0,498.78 L977.0,499.52 L971.0,500.22 L965.0,500.91 L959.0,501.56 L953.0,502.17 L947.0,502.75 L941.0,503.27 L935.0,503.76 L929.0,504.22 L923.0,504.66 L917.0,505.1 L911.0,505.54 L905.0,506.0 L899.0,506.48 L893.0,506.99 L887.0,507.52 L881.0,508.06 L875.0,508.63 L869.0,509.22 L863.0,509.82 L857.0,510.45 L851.0,511.1 L845.0,511.8 L839.0,512.53 L833.0,513.28 L827.0,514.08 L821.0,514.94 L815.0,515.86 L809.0,516.88 L803.0,518.06 L797.0,519.41 L791.0,520.86 L785.0,522.34 L779.0,523.79 L773.0,525.15 L767.0,526.5 L761.0,527.86 L755.0,529.18 L749.0,530.45 L743.0,531.62 L737.0,532.7 L731.0,533.74 L725.0,534.74 L719.0,535.71 L713.0,536.65 L707.0,537.56 L701.0,538.44 L695.0,539.29 L689.0,540.12 L683.0,540.93 L677.0,541.72 L671.0,542.49 L665.0,543.24 L659.0,543.96 L653.0,544.65 L647.0,545.3 L641.0,545.9 L635.0,546.46 L629.0,546.96 L623.0,547.43 L617.0,547.9 L611.0,548.37 L605.0,548.88 L599.0,549.41 L593.0,549.96 L587.0,550.51 L581.0,551.08 L575.0,551.65 L569.0,552.24 L563.0,552.85 L557.0,553.47 L551.0,554.12 L545.0,554.79 L539.0,555.48 L533.0,556.21 L527.0,557.0 L521.0,557.84 L515.0,558.72 L509.0,559.62 L503.0,560.54 L497.0,561.47 L491.0,562.45 L485.0,563.47 L479.0,564.49 L473.0,565.48 L467.0,566.4 L461.0,567.23 L455.0,568.0 Z" fill="#f492b6"/>
<path d="M455.0,568.0 L461.0,567.23 L467.0,566.4 L473.0,565.48 L479.0,564.49 L485.0,563.47 L491.0,562.45 L497.0,561.47 L503.0,560.54 L509.0,559.62 L515.0,558.72 L521.0,557.84 L527.0,557.0 L533.0,556.21 L539.0,555.48 L545.0,554.79 L551.0,554.12 L557.0,553.47 L563.0,552.85 L569.0,552.24 L575.0,551.65 L581.0,551.08 L587.0,550.51 L593.0,549.96 L599.0,549.41 L605.0,548.88 L611.0,548.37 L617.0,547.9 L623.0,547.43 L629.0,546.96 L635.0,546.46 L641.0,545.9 L647.0,545.3 L653.0,544.65 L659.0,543.96 L665.0,543.24 L671.0,542.49 L677.0,541.72 L683.0,540.93 L689.0,540.12 L695.0,539.29 L701.0,538.44 L707.0,537.56 L713.0,536.65 L719.0,535.71 L725.0,534.74 L731.0,533.74 L737.0,532.7 L743.0,531.62 L749.0,530.45 L755.0,529.18 L761.0,527.86 L767.0,526.5 L773.0,525.15 L779.0,523.79 L785.0,522.34 L791.0,520.86 L797.0,519.41 L803.0,518.06 L809.0,516.88 L815.0,515.86 L821.0,514.94 L827.0,514.08 L833.0,513.28 L839.0,512.53 L845.0,511.8 L851.0,511.1 L857.0,510.45 L863.0,509.82 L869.0,509.22 L875.0,508.63 L881.0,508.06 L887.0,507.52 L893.0,506.99 L899.0,506.48 L905.0,506.0 L911.0,505.54 L917.0,505.1 L923.0,504.66 L929.0,504.22 L935.0,503.76 L941.0,503.27 L947.0,502.75 L953.0,502.17 L959.0,501.56 L965.0,500.91 L971.0,500.22 L977.0,499.52 L983.0,498.78 L989.0,498.04 L995.0,497.27 L1001.0,496.5 L1007.0,495.73 L1013.0,494.95 L1019.0,494.18 L1025.0,493.38 L1031.0,492.57 L1037.0,491.75 L1043.0,490.91 L1049.0,490.06 L1055.0,489.2 L1061.0,488.34 L1067.0,487.47 L1073.0,486.61 L1079.0,485.75 L1085.0,484.9 L1091.0,484.05 L1097.0,483.2 L1103.0,482.35 L1109.0,481.5 L1115.0,480.65 L1121.0,479.8 L1127.0,478.95 L1133.0,478.09 L1139.0,477.24 L1145.0,476.38 L1151.0,475.52 L1157.0,474.66 L1163.0,473.8 L1169.0,472.94 L1170.0,472.8 L1170.0,480.5 L1169.0,480.63 L1163.0,481.41 L1157.0,482.18 L1151.0,482.97 L1145.0,483.75 L1139.0,484.55 L1133.0,485.34 L1127.0,486.14 L1121.0,486.94 L1115.0,487.74 L1109.0,488.55 L1103.0,489.35 L1097.0,490.17 L1091.0,490.98 L1085.0,491.8 L1079.0,492.63 L1073.0,493.48 L1067.0,494.35 L1061.0,495.23 L1055.0,496.11 L1049.0,496.98 L1043.0,497.85 L1037.0,498.7 L1031.0,499.53 L1025.0,500.33 L1019.0,501.09 L1013.0,501.82 L1007.0,502.55 L1001.0,503.26 L995.0,503.95 L989.0,504.64 L983.0,505.31 L977.0,505.96 L971.0,506.58 L965.0,507.19 L959.0,507.77 L953.0,508.32 L947.0,508.84 L941.0,509.33 L935.0,509.78 L929.0,510.21 L923.0,510.62 L917.0,511.02 L911.0,511.43 L905.0,511.84 L899.0,512.27 L893.0,512.71 L887.0,513.15 L881.0,513.6 L875.0,514.08 L869.0,514.58 L863.0,515.09 L857.0,515.63 L851.0,516.19 L845.0,516.8 L839.0,517.44 L833.0,518.12 L827.0,518.84 L821.0,519.61 L815.0,520.45 L809.0,521.36 L803.0,522.41 L797.0,523.6 L791.0,524.88 L785.0,526.19 L779.0,527.48 L773.0,528.7 L767.0,529.94 L761.0,531.18 L755.0,532.41 L749.0,533.57 L743.0,534.65 L737.0,535.63 L731.0,536.57 L725.0,537.47 L719.0,538.34 L713.0,539.18 L707.0,540.0 L701.0,540.79 L695.0,541.55 L689.0,542.31 L683.0,543.04 L677.0,543.76 L671.0,544.48 L665.0,545.19 L659.0,545.89 L653.0,546.55 L647.0,547.17 L641.0,547.72 L635.0,548.18 L629.0,548.59 L623.0,548.95 L617.0,549.31 L611.0,549.68 L605.0,550.09 L599.0,550.56 L593.0,551.05 L587.0,551.57 L581.0,552.1 L575.0,552.66 L569.0,553.24 L563.0,553.84 L557.0,554.45 L551.0,555.09 L545.0,555.74 L539.0,556.4 L533.0,557.09 L527.0,557.82 L521.0,558.59 L515.0,559.4 L509.0,560.23 L503.0,561.08 L497.0,561.93 L491.0,562.84 L485.0,563.79 L479.0,564.73 L473.0,565.65 L467.0,566.51 L461.0,567.28 L455.0,568.0 Z" fill="#fdc78c"/>
<path d="M455.0,568.0 L461.0,567.28 L467.0,566.51 L473.0,565.65 L479.0,564.73 L485.0,563.79 L491.0,562.84 L497.0,561.93 L503.0,561.08 L509.0,560.23 L515.0,559.4 L521.0,558.59 L527.0,557.82 L533.0,557.09 L539.0,556.4 L545.0,555.74 L551.0,555.09 L557.0,554.45 L563.0,553.84 L569.0,553.24 L575.0,552.66 L581.0,552.1 L587.0,551.57 L593.0,551.05 L599.0,550.56 L605.0,550.09 L611.0,549.68 L617.0,549.31 L623.0,548.95 L629.0,548.59 L635.0,548.18 L641.0,547.72 L647.0,547.17 L653.0,546.55 L659.0,545.89 L665.0,545.19 L671.0,544.48 L677.0,543.76 L683.0,543.04 L689.0,542.31 L695.0,541.55 L701.0,540.79 L707.0,540.0 L713.0,539.18 L719.0,538.34 L725.0,537.47 L731.0,536.57 L737.0,535.63 L743.0,534.65 L749.0,533.57 L755.0,532.41 L761.0,531.18 L767.0,529.94 L773.0,528.7 L779.0,527.48 L785.0,526.19 L791.0,524.88 L797.0,523.6 L803.0,522.41 L809.0,521.36 L815.0,520.45 L821.0,519.61 L827.0,518.84 L833.0,518.12 L839.0,517.44 L845.0,516.8 L851.0,516.19 L857.0,515.63 L863.0,515.09 L869.0,514.58 L875.0,514.08 L881.0,513.6 L887.0,513.15 L893.0,512.71 L899.0,512.27 L905.0,511.84 L911.0,511.43 L917.0,511.02 L923.0,510.62 L929.0,510.21 L935.0,509.78 L941.0,509.33 L947.0,508.84 L953.0,508.32 L959.0,507.77 L965.0,507.19 L971.0,506.58 L977.0,505.96 L983.0,505.31 L989.0,504.64 L995.0,503.95 L1001.0,503.26 L1007.0,502.55 L1013.0,501.82 L1019.0,501.09 L1025.0,500.33 L1031.0,499.53 L1037.0,498.7 L1043.0,497.85 L1049.0,496.98 L1055.0,496.11 L1061.0,495.23 L1067.0,494.35 L1073.0,493.48 L1079.0,492.63 L1085.0,491.8 L1091.0,490.98 L1097.0,490.17 L1103.0,489.35 L1109.0,488.55 L1115.0,487.74 L1121.0,486.94 L1127.0,486.14 L1133.0,485.34 L1139.0,484.55 L1145.0,483.75 L1151.0,482.97 L1157.0,482.18 L1163.0,481.41 L1169.0,480.63 L1170.0,480.5 L1170.0,490.0 L1169.0,490.11 L1163.0,490.78 L1157.0,491.45 L1151.0,492.12 L1145.0,492.79 L1139.0,493.46 L1133.0,494.14 L1127.0,494.81 L1121.0,495.49 L1115.0,496.17 L1109.0,496.85 L1103.0,497.54 L1097.0,498.22 L1091.0,498.91 L1085.0,499.6 L1079.0,500.29 L1073.0,500.99 L1067.0,501.7 L1061.0,502.41 L1055.0,503.12 L1049.0,503.83 L1043.0,504.54 L1037.0,505.25 L1031.0,505.95 L1025.0,506.64 L1019.0,507.32 L1013.0,507.99 L1007.0,508.68 L1001.0,509.38 L995.0,510.09 L989.0,510.79 L983.0,511.48 L977.0,512.15 L971.0,512.8 L965.0,513.42 L959.0,514.01 L953.0,514.55 L947.0,515.04 L941.0,515.49 L935.0,515.9 L929.0,516.29 L923.0,516.66 L917.0,517.02 L911.0,517.36 L905.0,517.71 L899.0,518.06 L893.0,518.38 L887.0,518.7 L881.0,519.04 L875.0,519.44 L869.0,519.88 L863.0,520.36 L857.0,520.88 L851.0,521.43 L845.0,522.0 L839.0,522.6 L833.0,523.22 L827.0,523.89 L821.0,524.61 L815.0,525.39 L809.0,526.25 L803.0,527.26 L797.0,528.42 L791.0,529.68 L785.0,530.96 L779.0,532.21 L773.0,533.38 L767.0,534.56 L761.0,535.73 L755.0,536.88 L749.0,537.97 L743.0,538.97 L737.0,539.87 L731.0,540.72 L725.0,541.54 L719.0,542.33 L713.0,543.08 L707.0,543.81 L701.0,544.51 L695.0,545.2 L689.0,545.88 L683.0,546.54 L677.0,547.21 L671.0,547.87 L665.0,548.53 L659.0,549.19 L653.0,549.82 L647.0,550.4 L641.0,550.92 L635.0,551.37 L629.0,551.76 L623.0,552.12 L617.0,552.46 L611.0,552.82 L605.0,553.2 L599.0,553.63 L593.0,554.07 L587.0,554.52 L581.0,554.99 L575.0,555.47 L569.0,555.96 L563.0,556.47 L557.0,556.98 L551.0,557.5 L545.0,558.04 L539.0,558.58 L533.0,559.13 L527.0,559.7 L521.0,560.28 L515.0,560.89 L509.0,561.51 L503.0,562.16 L497.0,562.85 L491.0,563.6 L485.0,564.4 L479.0,565.2 L473.0,565.99 L467.0,566.72 L461.0,567.38 L455.0,568.0 Z" fill="#fdf3a8"/>
<path d="M455.0,568.0 L461.0,567.38 L467.0,566.72 L473.0,565.99 L479.0,565.2 L485.0,564.4 L491.0,563.6 L497.0,562.85 L503.0,562.16 L509.0,561.51 L515.0,560.89 L521.0,560.28 L527.0,559.7 L533.0,559.13 L539.0,558.58 L545.0,558.04 L551.0,557.5 L557.0,556.98 L563.0,556.47 L569.0,555.96 L575.0,555.47 L581.0,554.99 L587.0,554.52 L593.0,554.07 L599.0,553.63 L605.0,553.2 L611.0,552.82 L617.0,552.46 L623.0,552.12 L629.0,551.76 L635.0,551.37 L641.0,550.92 L647.0,550.4 L653.0,549.82 L659.0,549.19 L665.0,548.53 L671.0,547.87 L677.0,547.21 L683.0,546.54 L689.0,545.88 L695.0,545.2 L701.0,544.51 L707.0,543.81 L713.0,543.08 L719.0,542.33 L725.0,541.54 L731.0,540.72 L737.0,539.87 L743.0,538.97 L749.0,537.97 L755.0,536.88 L761.0,535.73 L767.0,534.56 L773.0,533.38 L779.0,532.21 L785.0,530.96 L791.0,529.68 L797.0,528.42 L803.0,527.26 L809.0,526.25 L815.0,525.39 L821.0,524.61 L827.0,523.89 L833.0,523.22 L839.0,522.6 L845.0,522.0 L851.0,521.43 L857.0,520.88 L863.0,520.36 L869.0,519.88 L875.0,519.44 L881.0,519.04 L887.0,518.7 L893.0,518.38 L899.0,518.06 L905.0,517.71 L911.0,517.36 L917.0,517.02 L923.0,516.66 L929.0,516.29 L935.0,515.9 L941.0,515.49 L947.0,515.04 L953.0,514.55 L959.0,514.01 L965.0,513.42 L971.0,512.8 L977.0,512.15 L983.0,511.48 L989.0,510.79 L995.0,510.09 L1001.0,509.38 L1007.0,508.68 L1013.0,507.99 L1019.0,507.32 L1025.0,506.64 L1031.0,505.95 L1037.0,505.25 L1043.0,504.54 L1049.0,503.83 L1055.0,503.12 L1061.0,502.41 L1067.0,501.7 L1073.0,500.99 L1079.0,500.29 L1085.0,499.6 L1091.0,498.91 L1097.0,498.22 L1103.0,497.54 L1109.0,496.85 L1115.0,496.17 L1121.0,495.49 L1127.0,494.81 L1133.0,494.14 L1139.0,493.46 L1145.0,492.79 L1151.0,492.12 L1157.0,491.45 L1163.0,490.78 L1169.0,490.11 L1170.0,490.0 L1170.0,501.8 L1169.0,501.89 L1163.0,502.43 L1157.0,502.98 L1151.0,503.53 L1145.0,504.09 L1139.0,504.65 L1133.0,505.23 L1127.0,505.8 L1121.0,506.39 L1115.0,506.98 L1109.0,507.57 L1103.0,508.17 L1097.0,508.78 L1091.0,509.39 L1085.0,510.0 L1079.0,510.63 L1073.0,511.28 L1067.0,511.95 L1061.0,512.62 L1055.0,513.31 L1049.0,513.99 L1043.0,514.67 L1037.0,515.34 L1031.0,516.0 L1025.0,516.64 L1019.0,517.25 L1013.0,517.84 L1007.0,518.43 L1001.0,519.01 L995.0,519.58 L989.0,520.15 L983.0,520.7 L977.0,521.24 L971.0,521.76 L965.0,522.26 L959.0,522.75 L953.0,523.2 L947.0,523.63 L941.0,524.04 L935.0,524.44 L929.0,524.81 L923.0,525.17 L917.0,525.52 L911.0,525.84 L905.0,526.15 L899.0,526.45 L893.0,526.69 L887.0,526.91 L881.0,527.17 L875.0,527.52 L869.0,527.98 L863.0,528.52 L857.0,529.13 L851.0,529.76 L845.0,530.4 L839.0,531.05 L833.0,531.74 L827.0,532.47 L821.0,533.23 L815.0,534.02 L809.0,534.84 L803.0,535.71 L797.0,536.63 L791.0,537.59 L785.0,538.57 L779.0,539.55 L773.0,540.53 L767.0,541.55 L761.0,542.61 L755.0,543.65 L749.0,544.63 L743.0,545.5 L737.0,546.26 L731.0,546.98 L725.0,547.65 L719.0,548.3 L713.0,548.91 L707.0,549.5 L701.0,550.06 L695.0,550.61 L689.0,551.15 L683.0,551.68 L677.0,552.21 L671.0,552.73 L665.0,553.27 L659.0,553.81 L653.0,554.33 L647.0,554.78 L641.0,555.15 L635.0,555.42 L629.0,555.65 L623.0,555.83 L617.0,556.01 L611.0,556.21 L605.0,556.44 L599.0,556.72 L593.0,557.05 L587.0,557.42 L581.0,557.81 L575.0,558.23 L569.0,558.67 L563.0,559.12 L557.0,559.58 L551.0,560.05 L545.0,560.5 L539.0,560.95 L533.0,561.38 L527.0,561.8 L521.0,562.22 L515.0,562.65 L509.0,563.09 L503.0,563.56 L497.0,564.06 L491.0,564.6 L485.0,565.18 L479.0,565.78 L473.0,566.37 L467.0,566.94 L461.0,567.48 L455.0,568.0 Z" fill="#c9e4ad"/>
<path d="M455.0,568.0 L461.0,567.48 L467.0,566.94 L473.0,566.37 L479.0,565.78 L485.0,565.18 L491.0,564.6 L497.0,564.06 L503.0,563.56 L509.0,563.09 L515.0,562.65 L521.0,562.22 L527.0,561.8 L533.0,561.38 L539.0,560.95 L545.0,560.5 L551.0,560.05 L557.0,559.58 L563.0,559.12 L569.0,558.67 L575.0,558.23 L581.0,557.81 L587.0,557.42 L593.0,557.05 L599.0,556.72 L605.0,556.44 L611.0,556.21 L617.0,556.01 L623.0,555.83 L629.0,555.65 L635.0,555.42 L641.0,555.15 L647.0,554.78 L653.0,554.33 L659.0,553.81 L665.0,553.27 L671.0,552.73 L677.0,552.21 L683.0,551.68 L689.0,551.15 L695.0,550.61 L701.0,550.06 L707.0,549.5 L713.0,548.91 L719.0,548.3 L725.0,547.65 L731.0,546.98 L737.0,546.26 L743.0,545.5 L749.0,544.63 L755.0,543.65 L761.0,542.61 L767.0,541.55 L773.0,540.53 L779.0,539.55 L785.0,538.57 L791.0,537.59 L797.0,536.63 L803.0,535.71 L809.0,534.84 L815.0,534.02 L821.0,533.23 L827.0,532.47 L833.0,531.74 L839.0,531.05 L845.0,530.4 L851.0,529.76 L857.0,529.13 L863.0,528.52 L869.0,527.98 L875.0,527.52 L881.0,527.17 L887.0,526.91 L893.0,526.69 L899.0,526.45 L905.0,526.15 L911.0,525.84 L917.0,525.52 L923.0,525.17 L929.0,524.81 L935.0,524.44 L941.0,524.04 L947.0,523.63 L953.0,523.2 L959.0,522.75 L965.0,522.26 L971.0,521.76 L977.0,521.24 L983.0,520.7 L989.0,520.15 L995.0,519.58 L1001.0,519.01 L1007.0,518.43 L1013.0,517.84 L1019.0,517.25 L1025.0,516.64 L1031.0,516.0 L1037.0,515.34 L1043.0,514.67 L1049.0,513.99 L1055.0,513.31 L1061.0,512.62 L1067.0,511.95 L1073.0,511.28 L1079.0,510.63 L1085.0,510.0 L1091.0,509.39 L1097.0,508.78 L1103.0,508.17 L1109.0,507.57 L1115.0,506.98 L1121.0,506.39 L1127.0,505.8 L1133.0,505.23 L1139.0,504.65 L1145.0,504.09 L1151.0,503.53 L1157.0,502.98 L1163.0,502.43 L1169.0,501.89 L1170.0,501.8 L1170.0,519.5 L1169.0,519.57 L1163.0,519.98 L1157.0,520.39 L1151.0,520.81 L1145.0,521.23 L1139.0,521.65 L1133.0,522.08 L1127.0,522.51 L1121.0,522.94 L1115.0,523.38 L1109.0,523.82 L1103.0,524.26 L1097.0,524.7 L1091.0,525.15 L1085.0,525.6 L1079.0,526.06 L1073.0,526.53 L1067.0,527.01 L1061.0,527.5 L1055.0,527.99 L1049.0,528.48 L1043.0,528.97 L1037.0,529.45 L1031.0,529.92 L1025.0,530.38 L1019.0,530.82 L1013.0,531.25 L1007.0,531.67 L1001.0,532.08 L995.0,532.49 L989.0,532.89 L983.0,533.28 L977.0,533.67 L971.0,534.05 L965.0,534.41 L959.0,534.76 L953.0,535.1 L947.0,535.43 L941.0,535.74 L935.0,536.04 L929.0,536.33 L923.0,536.61 L917.0,536.88 L911.0,537.14 L905.0,537.39 L899.0,537.64 L893.0,537.86 L887.0,538.07 L881.0,538.3 L875.0,538.56 L869.0,538.84 L863.0,539.15 L857.0,539.48 L851.0,539.83 L845.0,540.2 L839.0,540.59 L833.0,541.0 L827.0,541.44 L821.0,541.9 L815.0,542.38 L809.0,542.88 L803.0,543.42 L797.0,543.99 L791.0,544.58 L785.0,545.19 L779.0,545.8 L773.0,546.4 L767.0,547.03 L761.0,547.68 L755.0,548.31 L749.0,548.92 L743.0,549.47 L737.0,549.96 L731.0,550.41 L725.0,550.83 L719.0,551.23 L713.0,551.61 L707.0,551.98 L701.0,552.34 L695.0,552.71 L689.0,553.08 L683.0,553.47 L677.0,553.88 L671.0,554.31 L665.0,554.82 L659.0,555.38 L653.0,555.92 L647.0,556.4 L641.0,556.76 L635.0,556.98 L629.0,557.16 L623.0,557.3 L617.0,557.43 L611.0,557.57 L605.0,557.75 L599.0,557.98 L593.0,558.26 L587.0,558.59 L581.0,558.94 L575.0,559.32 L569.0,559.72 L563.0,560.14 L557.0,560.56 L551.0,560.97 L545.0,561.38 L539.0,561.78 L533.0,562.15 L527.0,562.51 L521.0,562.86 L515.0,563.22 L509.0,563.59 L503.0,563.99 L497.0,564.42 L491.0,564.91 L485.0,565.44 L479.0,565.98 L473.0,566.53 L467.0,567.04 L461.0,567.53 L455.0,568.0 Z" fill="#cde9e6"/>
<path d="M455.0,568.0 L461.0,567.53 L467.0,567.04 L473.0,566.53 L479.0,565.98 L485.0,565.44 L491.0,564.91 L497.0,564.42 L503.0,563.99 L509.0,563.59 L515.0,563.22 L521.0,562.86 L527.0,562.51 L533.0,562.15 L539.0,561.78 L545.0,561.38 L551.0,560.97 L557.0,560.56 L563.0,560.14 L569.0,559.72 L575.0,559.32 L581.0,558.94 L587.0,558.59 L593.0,558.26 L599.0,557.98 L605.0,557.75 L611.0,557.57 L617.0,557.43 L623.0,557.3 L629.0,557.16 L635.0,556.98 L641.0,556.76 L647.0,556.4 L653.0,555.92 L659.0,555.38 L665.0,554.82 L671.0,554.31 L677.0,553.88 L683.0,553.47 L689.0,553.08 L695.0,552.71 L701.0,552.34 L707.0,551.98 L713.0,551.61 L719.0,551.23 L725.0,550.83 L731.0,550.41 L737.0,549.96 L743.0,549.47 L749.0,548.92 L755.0,548.31 L761.0,547.68 L767.0,547.03 L773.0,546.4 L779.0,545.8 L785.0,545.19 L791.0,544.58 L797.0,543.99 L803.0,543.42 L809.0,542.88 L815.0,542.38 L821.0,541.9 L827.0,541.44 L833.0,541.0 L839.0,540.59 L845.0,540.2 L851.0,539.83 L857.0,539.48 L863.0,539.15 L869.0,538.84 L875.0,538.56 L881.0,538.3 L887.0,538.07 L893.0,537.86 L899.0,537.64 L905.0,537.39 L911.0,537.14 L917.0,536.88 L923.0,536.61 L929.0,536.33 L935.0,536.04 L941.0,535.74 L947.0,535.43 L953.0,535.1 L959.0,534.76 L965.0,534.41 L971.0,534.05 L977.0,533.67 L983.0,533.28 L989.0,532.89 L995.0,532.49 L1001.0,532.08 L1007.0,531.67 L1013.0,531.25 L1019.0,530.82 L1025.0,530.38 L1031.0,529.92 L1037.0,529.45 L1043.0,528.97 L1049.0,528.48 L1055.0,527.99 L1061.0,527.5 L1067.0,527.01 L1073.0,526.53 L1079.0,526.06 L1085.0,525.6 L1091.0,525.15 L1097.0,524.7 L1103.0,524.26 L1109.0,523.82 L1115.0,523.38 L1121.0,522.94 L1127.0,522.51 L1133.0,522.08 L1139.0,521.65 L1145.0,521.23 L1151.0,520.81 L1157.0,520.39 L1163.0,519.98 L1169.0,519.57 L1170.0,519.5 L1170.0,568.0 L1169.0,568.0 L1163.0,568.0 L1157.0,568.0 L1151.0,568.0 L1145.0,568.0 L1139.0,568.0 L1133.0,568.0 L1127.0,568.0 L1121.0,568.0 L1115.0,568.0 L1109.0,568.0 L1103.0,568.0 L1097.0,568.0 L1091.0,568.0 L1085.0,568.0 L1079.0,568.0 L1073.0,568.0 L1067.0,568.0 L1061.0,568.0 L1055.0,568.0 L1049.0,568.0 L1043.0,568.0 L1037.0,568.0 L1031.0,568.0 L1025.0,568.0 L1019.0,568.0 L1013.0,568.0 L1007.0,568.0 L1001.0,568.0 L995.0,568.0 L989.0,568.0 L983.0,568.0 L977.0,568.0 L971.0,568.0 L965.0,568.0 L959.0,568.0 L953.0,568.0 L947.0,568.0 L941.0,568.0 L935.0,568.0 L929.0,568.0 L923.0,568.0 L917.0,568.0 L911.0,568.0 L905.0,568.0 L899.0,568.0 L893.0,568.0 L887.0,568.0 L881.0,568.0 L875.0,568.0 L869.0,568.0 L863.0,568.0 L857.0,568.0 L851.0,568.0 L845.0,568.0 L839.0,568.0 L833.0,568.0 L827.0,568.0 L821.0,568.0 L815.0,568.0 L809.0,568.0 L803.0,568.0 L797.0,568.0 L791.0,568.0 L785.0,568.0 L779.0,568.0 L773.0,568.0 L767.0,568.0 L761.0,568.0 L755.0,568.0 L749.0,568.0 L743.0,568.0 L737.0,568.0 L731.0,568.0 L725.0,568.0 L719.0,568.0 L713.0,568.0 L707.0,568.0 L701.0,568.0 L695.0,568.0 L689.0,568.0 L683.0,568.0 L677.0,568.0 L671.0,568.0 L665.0,568.0 L659.0,568.0 L653.0,568.0 L647.0,568.0 L641.0,568.0 L635.0,568.0 L629.0,568.0 L623.0,568.0 L617.0,568.0 L611.0,568.0 L605.0,568.0 L599.0,568.0 L593.0,568.0 L587.0,568.0 L581.0,568.0 L575.0,568.0 L569.0,568.0 L563.0,568.0 L557.0,568.0 L551.0,568.0 L545.0,568.0 L539.0,568.0 L533.0,568.0 L527.0,568.0 L521.0,568.0 L515.0,568.0 L509.0,568.0 L503.0,568.0 L497.0,568.0 L491.0,568.0 L485.0,568.0 L479.0,568.0 L473.0,568.0 L467.0,568.0 L461.0,568.0 L455.0,568.0 Z" fill="#98d9fa"/>
<clipPath id="stackclip"><path d="M455.0,568.0 L461.0,566.52 L467.0,565.02 L473.0,563.49 L479.0,561.93 L485.0,560.36 L491.0,558.8 L497.0,557.26 L503.0,555.74 L509.0,554.18 L515.0,552.61 L521.0,551.08 L527.0,549.63 L533.0,548.3 L539.0,547.13 L545.0,546.06 L551.0,545.05 L557.0,544.11 L563.0,543.2 L569.0,542.33 L575.0,541.48 L581.0,540.63 L587.0,539.76 L593.0,538.87 L599.0,537.95 L605.0,536.97 L611.0,535.95 L617.0,534.9 L623.0,533.84 L629.0,532.76 L635.0,531.69 L641.0,530.62 L647.0,529.59 L653.0,528.57 L659.0,527.54 L665.0,526.46 L671.0,525.31 L677.0,524.05 L683.0,522.72 L689.0,521.33 L695.0,519.87 L701.0,518.37 L707.0,516.81 L713.0,515.22 L719.0,513.59 L725.0,511.93 L731.0,510.26 L737.0,508.57 L743.0,506.87 L749.0,505.1 L755.0,503.25 L761.0,501.36 L767.0,499.46 L773.0,497.61 L779.0,495.79 L785.0,493.96 L791.0,492.13 L797.0,490.33 L803.0,488.6 L809.0,486.96 L815.0,485.41 L821.0,483.92 L827.0,482.47 L833.0,481.09 L839.0,479.76 L845.0,478.5 L851.0,477.3 L857.0,476.17 L863.0,475.07 L869.0,474.02 L875.0,472.99 L881.0,471.98 L887.0,471.0 L893.0,470.05 L899.0,469.15 L905.0,468.3 L911.0,467.52 L917.0,466.77 L923.0,466.04 L929.0,465.31 L935.0,464.55 L941.0,463.75 L947.0,462.88 L953.0,461.94 L959.0,460.95 L965.0,459.92 L971.0,458.85 L977.0,457.73 L983.0,456.59 L989.0,455.41 L995.0,454.2 L1001.0,452.97 L1007.0,451.72 L1013.0,450.45 L1019.0,449.16 L1025.0,447.8 L1031.0,446.38 L1037.0,444.91 L1043.0,443.4 L1049.0,441.87 L1055.0,440.32 L1061.0,438.77 L1067.0,437.23 L1073.0,435.72 L1079.0,434.23 L1085.0,432.8 L1091.0,431.4 L1097.0,430.01 L1103.0,428.62 L1109.0,427.25 L1115.0,425.89 L1121.0,424.53 L1127.0,423.19 L1133.0,421.86 L1139.0,420.54 L1145.0,419.23 L1151.0,417.93 L1157.0,416.64 L1163.0,415.37 L1169.0,414.11 L1170.0,413.9 L1171.7,413.9 L1171.7,568.0 L455,568.0 Z"/></clipPath>
<g clip-path="url(#stackclip)">
<rect x="466" y="413.9" width="1" height="154.10000000000002" fill="#000" fill-opacity="0.08"/>
<rect x="535" y="413.9" width="1" height="154.10000000000002" fill="#000" fill-opacity="0.08"/>
<rect x="603" y="413.9" width="1" height="154.10000000000002" fill="#000" fill-opacity="0.08"/>
<rect x="672" y="413.9" width="1" height="154.10000000000002" fill="#000" fill-opacity="0.08"/>
<rect x="741" y="413.9" width="1" height="154.10000000000002" fill="#000" fill-opacity="0.08"/>
<rect x="809.6" y="413.9" width="1" height="154.10000000000002" fill="#000" fill-opacity="0.08"/>
<rect x="878" y="413.9" width="1" height="154.10000000000002" fill="#000" fill-opacity="0.08"/>
<rect x="947" y="413.9" width="1" height="154.10000000000002" fill="#000" fill-opacity="0.08"/>
<rect x="1016" y="413.9" width="1" height="154.10000000000002" fill="#000" fill-opacity="0.08"/>
<rect x="1084" y="413.9" width="1" height="154.10000000000002" fill="#000" fill-opacity="0.08"/>
<rect x="454.5" y="466.7" width="717.2" height="1" fill="#000" fill-opacity="0.05"/>
<rect x="454.5" y="517.1" width="717.2" height="1" fill="#000" fill-opacity="0.05"/>
</g>
<rect x="453.6" y="413.4" width="1" height="155.10000000000002" fill="#8e8e8e"/>
<rect x="453.6" y="567.5" width="718.3000000000001" height="1.1" fill="#6c8088"/>
<rect x="466" y="568.0" width="1" height="5" fill="#777"/>
<text x="466.5" y="582.0" font-size="8.9" fill="#666" text-anchor="middle" textLength="47" lengthAdjust="spacingAndGlyphs" stroke="#666" stroke-width="0.2">Jan 05 2021</text>
<rect x="535" y="568.0" width="1" height="5" fill="#777"/>
<text x="535.3" y="582.0" font-size="8.9" fill="#666" text-anchor="middle" textLength="47" lengthAdjust="spacingAndGlyphs" stroke="#666" stroke-width="0.2">Jan 30 2021</text>
<rect x="603" y="568.0" width="1" height="5" fill="#777"/>
<text x="604.0" y="582.0" font-size="8.9" fill="#666" text-anchor="middle" textLength="48.1" lengthAdjust="spacingAndGlyphs" stroke="#666" stroke-width="0.2">Feb 24 2021</text>
<rect x="672" y="568.0" width="1" height="5" fill="#777"/>
<text x="672.6" y="582.0" font-size="8.9" fill="#666" text-anchor="middle" textLength="49.9" lengthAdjust="spacingAndGlyphs" stroke="#666" stroke-width="0.2">Mar 21 2021</text>
<rect x="741" y="568.0" width="1" height="5" fill="#777"/>
<text x="741.3" y="582.0" font-size="8.9" fill="#666" text-anchor="middle" textLength="48.1" lengthAdjust="spacingAndGlyphs" stroke="#666" stroke-width="0.2">Apr 15 2021</text>
<rect x="809.6" y="568.0" width="1" height="5" fill="#777"/>
<text x="810.0" y="582.0" font-size="8.9" fill="#666" text-anchor="middle" textLength="51" lengthAdjust="spacingAndGlyphs" stroke="#666" stroke-width="0.2">May 10 2021</text>
<rect x="878" y="568.0" width="1" height="5" fill="#777"/>
<text x="878.6" y="582.0" font-size="8.9" fill="#666" text-anchor="middle" textLength="47.8" lengthAdjust="spacingAndGlyphs" stroke="#666" stroke-width="0.2">Jun 04 2021</text>
<rect x="947" y="568.0" width="1" height="5" fill="#777"/>
<text x="947.4" y="582.0" font-size="8.9" fill="#666" text-anchor="middle" textLength="47.8" lengthAdjust="spacingAndGlyphs" stroke="#666" stroke-width="0.2">Jun 29 2021</text>
<rect x="1016" y="568.0" width="1" height="5" fill="#777"/>
<text x="1016.2" y="582.0" font-size="8.9" fill="#666" text-anchor="middle" textLength="46.3" lengthAdjust="spacingAndGlyphs" stroke="#666" stroke-width="0.2">Jul 24 2021</text>
<rect x="1084" y="568.0" width="1" height="5" fill="#777"/>
<text x="1084.9" y="582.0" font-size="8.9" fill="#666" text-anchor="middle" textLength="49.3" lengthAdjust="spacingAndGlyphs" stroke="#666" stroke-width="0.2">Aug 18 2021</text>
<rect x="1170.7" y="568.0" width="1" height="5" fill="#777"/>
<text x="1177.2" y="582.0" font-size="8.9" fill="#666" text-anchor="end" textLength="48.5" lengthAdjust="spacingAndGlyphs" stroke="#666" stroke-width="0.2">Sep 18 2021</text>
<rect x="449.5" y="413.4" width="4.2" height="1" fill="#7c7c7c"/>
<text x="448.2" y="417.0" font-size="8.9" fill="#6a6a6a" text-anchor="end" textLength="30.8" lengthAdjust="spacingAndGlyphs" stroke="#6a6a6a" stroke-width="0.2">456.8M</text>
<rect x="449.5" y="466.7" width="4.2" height="1" fill="#7c7c7c"/>
<text x="448.2" y="470.3" font-size="8.9" fill="#6a6a6a" text-anchor="end" textLength="23.3" lengthAdjust="spacingAndGlyphs" stroke="#6a6a6a" stroke-width="0.2">300M</text>
<rect x="449.5" y="517.1" width="4.2" height="1" fill="#7c7c7c"/>
<text x="448.2" y="520.7" font-size="8.9" fill="#6a6a6a" text-anchor="end" textLength="23.0" lengthAdjust="spacingAndGlyphs" stroke="#6a6a6a" stroke-width="0.2">150M</text>
<rect x="449.5" y="567.5" width="4.2" height="1" fill="#7c7c7c"/>
<text x="448.2" y="571.1" font-size="8.9" fill="#6a6a6a" text-anchor="end" textLength="4.8" lengthAdjust="spacingAndGlyphs" stroke="#6a6a6a" stroke-width="0.2">0</text>
<text x="422.0" y="491" font-size="8.7" fill="#222" text-anchor="middle" textLength="77" lengthAdjust="spacingAndGlyphs" stroke="#222" stroke-width="0.2" transform="rotate(-90 422.0 491)">Summed new_cases</text>
<text x="812.6" y="595.6" font-size="8.7" fill="#222" text-anchor="middle" textLength="17.2" lengthAdjust="spacingAndGlyphs" stroke="#222" stroke-width="0.35">date</text></g>
</svg>
<div class="fade"></div>
<svg class="abs" width="10" height="10" style="left:0;top:599px" viewBox="0 0 10 10"><path d="M0 0 Q0 10 10 10 H0 Z" fill="#000"/></svg>
<svg class="abs" width="10" height="10" style="left:1190px;top:599px" viewBox="0 0 10 10"><path d="M10 0 Q10 10 0 10 H10 Z" fill="#0d2530"/></svg>
</div>
</body>
</html>
